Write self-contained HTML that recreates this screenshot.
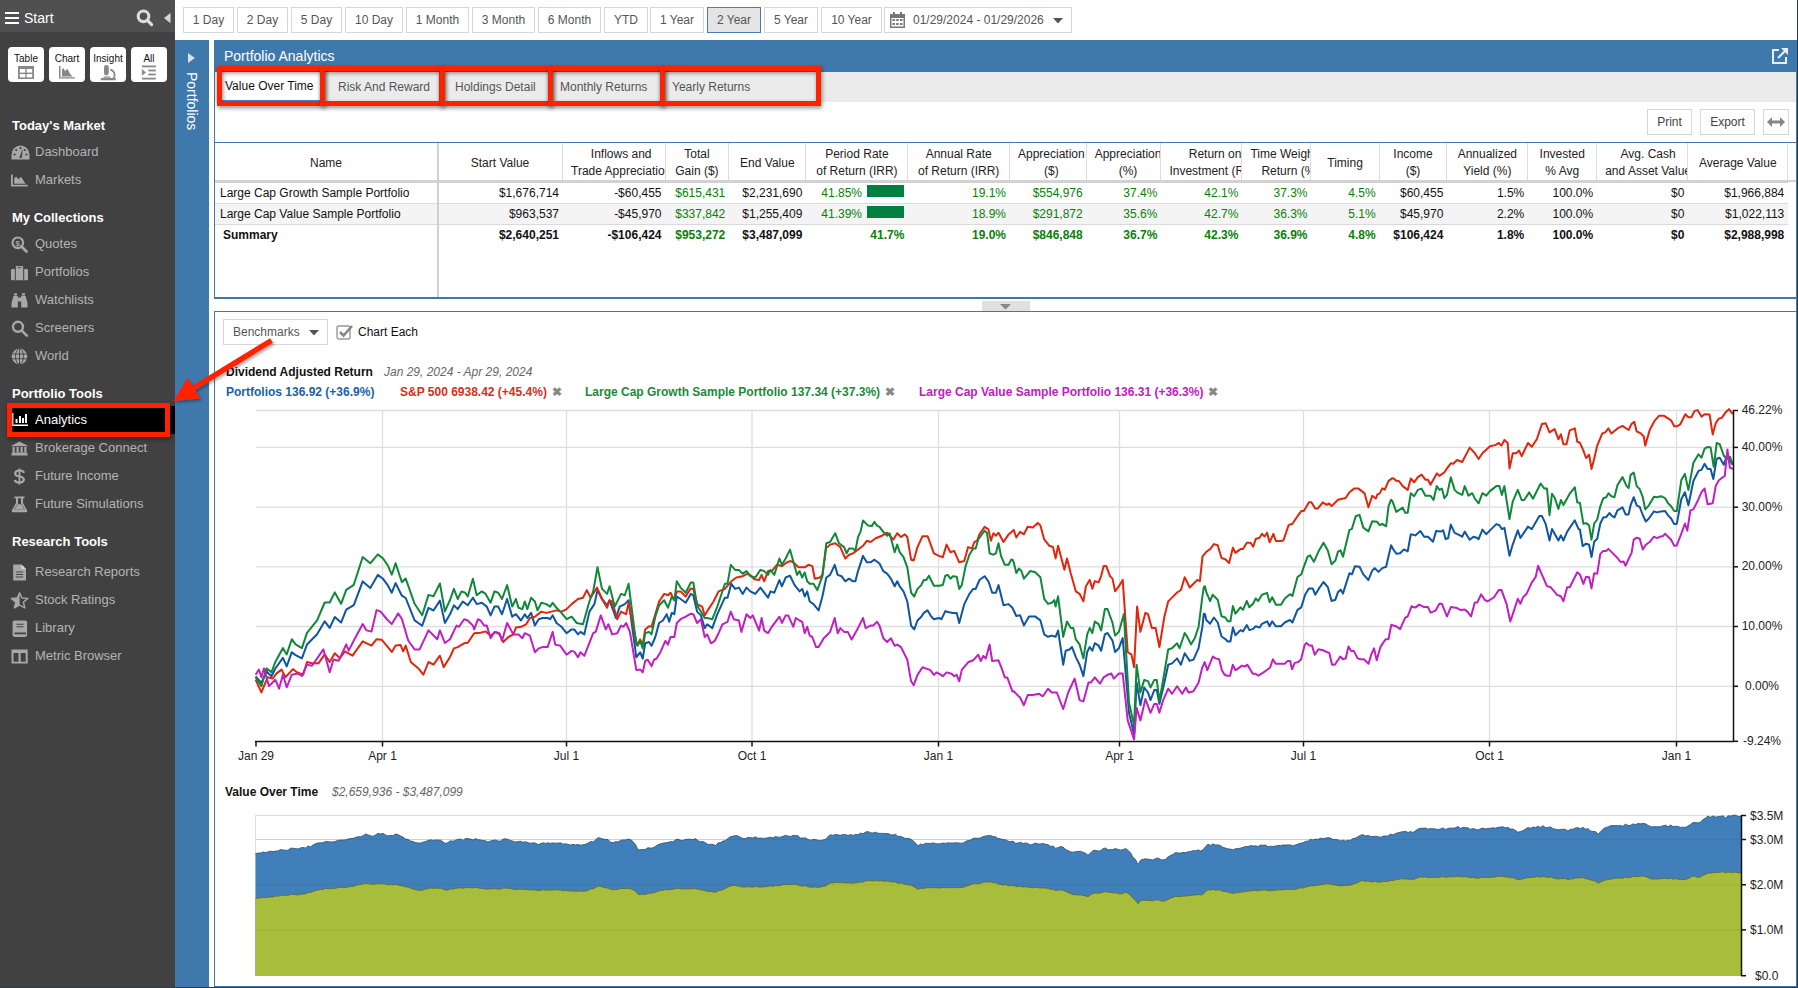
<!DOCTYPE html><html><head><meta charset="utf-8"><style>
*{box-sizing:border-box}
body{margin:0;width:1798px;height:988px;overflow:hidden;background:#fff;font-family:"Liberation Sans", sans-serif;position:relative}
.abs{position:absolute}
.sb{left:0;top:0;width:175px;height:988px;background:#414141}
.sbh{left:0;top:0;width:175px;height:32px;background:#505050}
.qb{position:absolute;top:47px;width:36px;height:35px;background:#fff;border-radius:4px;font-size:10px;color:#111;text-align:center;line-height:12px;padding-top:6px}
.sec{position:absolute;left:12px;color:#fff;font-weight:bold;font-size:13px;white-space:nowrap}
.it{position:absolute;left:35px;color:#b4b4b4;font-size:13px;white-space:nowrap}
.ic{position:absolute;left:10.5px;width:17px;height:17px}
.tb{position:absolute;top:7px;height:26px;border:1px solid #d6d6d6;background:#fff;color:#555;font-size:12px;text-align:center;line-height:24px}
.hd{position:absolute;top:143px;height:37px;overflow:hidden;font-size:12px;color:#222;text-align:center;border-right:1px solid #dcdcdc}
.hd span{display:inline-block;line-height:17px;white-space:nowrap;text-align:center}
.cell{position:absolute;height:21px;font-size:12px;line-height:21px;text-align:right;padding-right:4px;white-space:nowrap;overflow:hidden}
</style></head><body>

<div class="abs sb"></div><div class="abs sbh"></div>
<div class="abs" style="left:5px;top:12px;width:14px;height:2px;background:#fff"></div>
<div class="abs" style="left:5px;top:17px;width:14px;height:2px;background:#fff"></div>
<div class="abs" style="left:5px;top:22px;width:14px;height:2px;background:#fff"></div>
<div class="abs" style="left:24px;top:10px;color:#fff;font-size:14px;line-height:16px">Start</div>
<svg class="abs" style="left:136px;top:9px" width="18" height="18" viewBox="0 0 18 18"><circle cx="7.5" cy="7.3" r="5.3" fill="none" stroke="#dcdcdc" stroke-width="3.1"/><line x1="11.3" y1="11.2" x2="15.6" y2="15.6" stroke="#dcdcdc" stroke-width="3.3" stroke-linecap="round"/></svg>
<svg class="abs" style="left:164px;top:12.8px" width="7" height="11" viewBox="0 0 7 11"><path d="M6.5,0 L0,5.1 L6.5,10.2 Z" fill="#d8d8d8"/></svg>
<div class="qb" style="left:8px">Table<svg style="position:absolute;left:10px;top:18.5px;overflow:visible" width="16" height="14" viewBox="0 0 16 14"><rect x="0" y="0" width="16" height="13" fill="#888"/><rect x="1.8" y="3" width="5.5" height="3.6" fill="#fff"/><rect x="8.7" y="3" width="5.5" height="3.6" fill="#fff"/><rect x="1.8" y="8" width="5.5" height="3.4" fill="#fff"/><rect x="8.7" y="8" width="5.5" height="3.4" fill="#fff"/></svg></div>
<div class="qb" style="left:49px">Chart<svg style="position:absolute;left:10px;top:18.5px;overflow:visible" width="16" height="14" viewBox="0 0 16 14"><path d="M0,0 L1.5,0 L1.5,11.2 L16,11.2 L16,12.6 L0,12.6 Z" fill="#888"/><path d="M3,10.5 L3,3.5 L4.3,2 L6,5 L8.3,2.8 L11.2,8 L13.5,10.5 Z" fill="#888"/></svg></div>
<div class="qb" style="left:90px">Insight<svg style="position:absolute;left:10px;top:18.5px;overflow:visible" width="16" height="14" viewBox="0 0 16 14"><rect x="4" y="-1" width="4.8" height="10.4" rx="2.4" fill="#888"/><path d="M10.3,3.5 A5.5,5.5 0 0 1 13.5,12.2" fill="none" stroke="#888" stroke-width="1.8"/><rect x="3.5" y="10.5" width="6.8" height="1.2" fill="#888"/><path d="M1.5,12 L15.5,12 L15.9,14.2 L0.2,14.2 Z" fill="#888"/></svg></div>
<div class="qb" style="left:131px">All<svg style="position:absolute;left:10px;top:18.5px;overflow:visible" width="16" height="14" viewBox="0 0 16 14"><rect x="0.9" y="-0.5" width="13.9" height="1.8" fill="#888"/><rect x="7.3" y="3.6" width="7.5" height="1.8" fill="#888"/><rect x="7.3" y="7.6" width="7.5" height="1.8" fill="#888"/><rect x="0.9" y="11.7" width="13.9" height="1.8" fill="#888"/><path d="M0.9,3.1 L5,6.4 L0.9,9.7 Z" fill="#888"/></svg></div>
<div class="sec" style="top:118px">Today's Market</div>
<div class="sec" style="top:210px">My Collections</div>
<div class="sec" style="top:386px">Portfolio Tools</div>
<div class="sec" style="top:534px">Research Tools</div>
<div class="it" style="top:143.5px">Dashboard</div>
<svg class="ic" style="top:143.5px;overflow:visible" width="17" height="17" viewBox="0 0 17 17"><path d="M0.5,15.5 L0.5,10.8 A9,9.3 0 0 1 18.5,10.8 L18.5,15.5 Z" fill="#a8a8a8"/><circle cx="3.6" cy="10.5" r="1.1" fill="#414141"/><circle cx="5.2" cy="6" r="1.1" fill="#414141"/><circle cx="13.8" cy="6" r="1.1" fill="#414141"/><circle cx="15.4" cy="10.5" r="1.1" fill="#414141"/><circle cx="9.5" cy="4.2" r="1.1" fill="#414141"/><path d="M8.3,14 L11.8,4.5 L10.8,14 Z" fill="#414141"/></svg>
<div class="it" style="top:171.5px">Markets</div>
<svg class="ic" style="top:171.5px;overflow:visible" width="17" height="17" viewBox="0 0 17 17"><path d="M0,2.5 L1.8,2.5 L1.8,12.8 L16.7,12.8 L16.7,14.5 L0,14.5 Z" fill="#a8a8a8"/><path d="M3.2,11.8 L3.2,6.5 L5,4.5 L7.5,7.2 L10,4.8 L14.5,11.8 Z" fill="#a8a8a8"/></svg>
<div class="it" style="top:235.5px">Quotes</div>
<svg class="ic" style="top:235.5px;overflow:visible" width="17" height="17" viewBox="0 0 17 17"><circle cx="6.8" cy="6.8" r="5.3" fill="none" stroke="#a8a8a8" stroke-width="2.2"/><line x1="10.5" y1="10.5" x2="15.5" y2="15.5" stroke="#a8a8a8" stroke-width="2.8" stroke-linecap="round"/><text x="6.8" y="9.6" font-size="8" font-weight="bold" text-anchor="middle" fill="#a8a8a8" font-family="Liberation Sans">$</text></svg>
<div class="it" style="top:263.5px">Portfolios</div>
<svg class="ic" style="top:263.5px;overflow:visible" width="17" height="17" viewBox="0 0 17 17"><rect x="4.8" y="2" width="7.4" height="3" rx="0.8" fill="#a8a8a8"/><rect x="6.5" y="3.3" width="4" height="0.9" fill="#414141"/><rect x="0" y="5" width="17" height="11.2" rx="1.2" fill="#a8a8a8"/><rect x="3.8" y="5" width="1" height="11.2" fill="#414141"/><rect x="12.2" y="5" width="1" height="11.2" fill="#414141"/></svg>
<div class="it" style="top:291.5px">Watchlists</div>
<svg class="ic" style="top:291.5px;overflow:visible" width="17" height="17" viewBox="0 0 17 17"><rect x="3" y="1.3" width="3" height="2" fill="#a8a8a8"/><rect x="11" y="1.3" width="3" height="2" fill="#a8a8a8"/><path d="M2.5,3.8 L6.8,3.8 L6.8,15.5 L0.5,15.5 L0.5,11 Z M10.2,3.8 L14.5,3.8 L16.5,11 L16.5,15.5 L10.2,15.5 Z M6.8,5.5 L10.2,5.5 L10.2,9.5 L6.8,9.5 Z" fill="#a8a8a8"/></svg>
<div class="it" style="top:319.5px">Screeners</div>
<svg class="ic" style="top:319.5px;overflow:visible" width="17" height="17" viewBox="0 0 17 17"><circle cx="7" cy="6.8" r="5" fill="none" stroke="#a8a8a8" stroke-width="2.4"/><line x1="10.8" y1="10.6" x2="15.8" y2="15.6" stroke="#a8a8a8" stroke-width="2.6" stroke-linecap="round"/></svg>
<div class="it" style="top:347.5px">World</div>
<svg class="ic" style="top:347.5px;overflow:visible" width="17" height="17" viewBox="0 0 17 17"><circle cx="8.5" cy="8.4" r="7.8" fill="#a8a8a8"/><path d="M0.5,6 L16.5,6 M0.5,10.8 L16.5,10.8 M8.5,0.5 L8.5,16.3" stroke="#414141" stroke-width="0.9"/><ellipse cx="8.5" cy="8.4" rx="4" ry="7.8" fill="none" stroke="#414141" stroke-width="0.9"/></svg>
<div class="it" style="top:439.5px">Brokerage Connect</div>
<svg class="ic" style="top:439.5px;overflow:visible" width="17" height="17" viewBox="0 0 17 17"><path d="M0.3,5.8 L8.5,1.5 L16.7,5.8 L16.7,6.3 L0.3,6.3 Z" fill="#a8a8a8"/><rect x="1.5" y="7" width="2.2" height="5.5" fill="#a8a8a8"/><rect x="5.5" y="7" width="2.2" height="5.5" fill="#a8a8a8"/><rect x="9.5" y="7" width="2.2" height="5.5" fill="#a8a8a8"/><rect x="13.3" y="7" width="2.2" height="5.5" fill="#a8a8a8"/><path d="M1,12.5 L16,12.5 L16.7,15.5 L0.3,15.5 Z" fill="#a8a8a8"/></svg>
<div class="it" style="top:467.5px">Future Income</div>
<svg class="ic" style="top:467.5px;overflow:visible" width="17" height="17" viewBox="0 0 17 17"><rect x="7.6" y="0.5" width="1.8" height="16" fill="#a8a8a8"/><path d="M12.8,4.8 Q12.5,2.5 8.5,2.5 Q4.2,2.5 4.2,5.5 Q4.2,7.8 8.5,8.5 Q12.8,9.2 12.8,11.5 Q12.8,14.5 8.5,14.5 Q4.2,14.5 3.8,12" fill="none" stroke="#a8a8a8" stroke-width="2.2"/></svg>
<div class="it" style="top:495.5px">Future Simulations</div>
<svg class="ic" style="top:495.5px;overflow:visible" width="17" height="17" viewBox="0 0 17 17"><rect x="3.5" y="0.5" width="10" height="1.8" fill="#a8a8a8"/><path d="M5,2 L7,2 L7,7.5 L3,13.5 L14,13.5 L10,7.5 L10,2 L12,2 L12,7 L16.2,14.5 Q16.5,16.2 14.8,16.2 L2.2,16.2 Q0.5,16.2 0.8,14.5 L5,7 Z" fill="#a8a8a8"/><path d="M3.5,13.5 L6.8,8.3 L10.2,8.3 L13.5,13.5 Z" fill="#a8a8a8"/></svg>
<div class="it" style="top:563.5px">Research Reports</div>
<svg class="ic" style="top:563.5px;overflow:visible" width="17" height="17" viewBox="0 0 17 17"><path d="M2.2,0.5 L10.5,0.5 L15,5 L15,16.5 L2.2,16.5 Z" fill="#a8a8a8"/><path d="M10.5,0.5 L10.5,5 L15,5" fill="#d8d8d8"/><path d="M4.8,8 L12.2,8 M4.8,10.5 L12.2,10.5 M4.8,13 L12.2,13" stroke="#414141" stroke-width="1.1"/></svg>
<div class="it" style="top:591.5px">Stock Ratings</div>
<svg class="ic" style="top:591.5px;overflow:visible" width="17" height="17" viewBox="0 0 17 17"><path d="M8.6,0.8 L11,6 L16.8,6.4 L12.4,10.2 L13.8,16 L8.6,13 L3.4,16 L4.8,10.2 L0.4,6.4 L6.2,6 Z" fill="none" stroke="#a8a8a8" stroke-width="1.4" stroke-linejoin="round"/><path d="M8.6,0.8 L6.2,6 L0.4,6.4 L4.8,10.2 L3.4,16 L8.6,13 Z" fill="#a8a8a8"/><path d="M8.6,3 L10.2,6.8 L14.5,7.2 L11.3,9.9 L12.3,14.2 L8.6,12" fill="#a8a8a8" opacity="0.0"/></svg>
<div class="it" style="top:619.5px">Library</div>
<svg class="ic" style="top:619.5px;overflow:visible" width="17" height="17" viewBox="0 0 17 17"><rect x="1.6" y="0.5" width="14.5" height="16.4" rx="1.8" fill="#a8a8a8"/><path d="M5.5,4.3 L12.5,4.3 M5.5,6.8 L12.5,6.8" stroke="#414141" stroke-width="1.1"/><rect x="3.5" y="12.5" width="11.5" height="1.8" fill="#414141"/></svg>
<div class="it" style="top:647.5px">Metric Browser</div>
<svg class="ic" style="top:647.5px;overflow:visible" width="17" height="17" viewBox="0 0 17 17"><rect x="0.5" y="1.5" width="16.2" height="14" fill="#a8a8a8"/><rect x="2.5" y="5" width="5" height="8.7" fill="#414141"/><rect x="9.7" y="5" width="5" height="8.7" fill="#414141"/></svg>
<div class="abs" style="left:10px;top:406px;width:165px;height:28px;background:#000"></div>
<div class="abs" style="left:35px;top:412px;color:#fff;font-size:13px;white-space:nowrap">Analytics</div>
<svg class="abs" style="left:12px;top:413px" width="16" height="13" viewBox="0 0 16 13"><rect x="0" y="0" width="1.5" height="13" fill="#fff"/><rect x="0" y="11.5" width="16" height="1.5" fill="#fff"/><rect x="3.5" y="6" width="2" height="4" fill="#fff"/><rect x="7" y="3" width="2" height="7" fill="#fff"/><rect x="10" y="5" width="2" height="5" fill="#fff"/><rect x="13" y="1" width="2" height="9" fill="#fff"/></svg>
<div class="abs" style="left:7px;top:403px;width:163px;height:34px;border:5px solid #ff2200;filter:drop-shadow(1px 2px 2px rgba(0,0,0,.45))"></div>
<div class="tb" style="left:183px;width:51px">1 Day</div>
<div class="tb" style="left:237px;width:51px">2 Day</div>
<div class="tb" style="left:291px;width:51px">5 Day</div>
<div class="tb" style="left:345px;width:58px">10 Day</div>
<div class="tb" style="left:406px;width:63px">1 Month</div>
<div class="tb" style="left:472px;width:63px">3 Month</div>
<div class="tb" style="left:538px;width:63px">6 Month</div>
<div class="tb" style="left:604px;width:44px">YTD</div>
<div class="tb" style="left:650px;width:54px">1 Year</div>
<div class="tb" style="left:707px;width:54px;background:#e4e4e4;border-color:#4a7db5">2 Year</div>
<div class="tb" style="left:764px;width:54px">5 Year</div>
<div class="tb" style="left:821px;width:61px">10 Year</div>
<div class="tb" style="left:884px;width:188px;text-align:left;padding-left:28px">01/29/2024 - 01/29/2026</div>
<svg class="abs" style="left:890px;top:12px" width="15" height="16" viewBox="0 0 15 16"><rect x="0" y="2" width="15" height="14" fill="#777"/><rect x="3" y="0" width="2" height="4" fill="#777"/><rect x="10" y="0" width="2" height="4" fill="#777"/><rect x="1.5" y="6" width="12" height="8.5" fill="#fff"/><g fill="#777"><rect x="2.5" y="7" width="2.5" height="2"/><rect x="6.2" y="7" width="2.5" height="2"/><rect x="10" y="7" width="2.5" height="2"/><rect x="2.5" y="11" width="2.5" height="2"/><rect x="6.2" y="11" width="2.5" height="2"/><rect x="10" y="11" width="2.5" height="2"/></g></svg>
<svg class="abs" style="left:1053px;top:18px" width="10" height="6" viewBox="0 0 10 6"><path d="M0,0 L10,0 L5,5.5 Z" fill="#555"/></svg>
<div class="abs" style="left:175px;top:40px;width:34px;height:948px;background:#3f78ab"></div>
<svg class="abs" style="left:188px;top:53px" width="7" height="10" viewBox="0 0 7 10"><path d="M0,0 L6.8,5 L0,10 Z" fill="#d8e2ec"/></svg>
<div class="abs" style="left:183px;top:72px;width:20px;height:60px;"><div style="position:absolute;left:0;top:0;transform-origin:0 0;transform:translate(18px,0) rotate(90deg);color:#fff;font-size:14px;white-space:nowrap;line-height:18px">Portfolios</div></div>
<div class="abs" style="left:214px;top:40px;width:1px;height:259px;background:#3f78ab"></div>
<div class="abs" style="left:1796px;top:40px;width:1px;height:948px;background:#3f78ab"></div>
<div class="abs" style="left:1797px;top:0px;width:1px;height:988px;background:#263f4a"></div>
<div class="abs" style="left:214px;top:40px;width:1582px;height:32px;background:#3f78ab"></div>
<div class="abs" style="left:224px;top:47px;color:#fff;font-size:14px;line-height:18px;white-space:nowrap">Portfolio Analytics</div>
<svg class="abs" style="left:1771px;top:47px" width="18" height="18" viewBox="0 0 18 18"><path d="M8,3 L2,3 L2,16 L15,16 L15,10" fill="none" stroke="#e8eef5" stroke-width="2"/><path d="M10,1 L17,1 L17,8 Z" fill="#e8eef5"/><line x1="7" y1="11" x2="14" y2="4" stroke="#e8eef5" stroke-width="2.2"/></svg>
<div class="abs" style="left:215px;top:72px;width:1581px;height:30px;background:#ebebeb"></div>
<div class="abs" style="left:218px;top:72px;width:104px;height:30px;background:#fff;border-bottom:2px solid #3d8fe0"></div>
<div class="abs" style="left:225px;top:79px;color:#111;font-size:12px;line-height:14px;white-space:nowrap">Value Over Time</div>
<div class="abs" style="left:338px;top:80px;color:#555;font-size:12px;line-height:14px;white-space:nowrap">Risk And Reward</div>
<div class="abs" style="left:455px;top:80px;color:#555;font-size:12px;line-height:14px;white-space:nowrap">Holdings Detail</div>
<div class="abs" style="left:560px;top:80px;color:#555;font-size:12px;line-height:14px;white-space:nowrap">Monthly Returns</div>
<div class="abs" style="left:672px;top:80px;color:#555;font-size:12px;line-height:14px;white-space:nowrap">Yearly Returns</div>
<div class="abs" style="left:217px;top:66px;width:108px;height:40px;border:5px solid #ff2200;filter:drop-shadow(1px 2px 2px rgba(0,0,0,.45))"></div>
<div class="abs" style="left:320px;top:66px;width:124px;height:40px;border:5px solid #ff2200;filter:drop-shadow(1px 2px 2px rgba(0,0,0,.45))"></div>
<div class="abs" style="left:440px;top:66px;width:113px;height:40px;border:5px solid #ff2200;filter:drop-shadow(1px 2px 2px rgba(0,0,0,.45))"></div>
<div class="abs" style="left:548px;top:66px;width:117px;height:40px;border:5px solid #ff2200;filter:drop-shadow(1px 2px 2px rgba(0,0,0,.45))"></div>
<div class="abs" style="left:660px;top:66px;width:161px;height:40px;border:5px solid #ff2200;filter:drop-shadow(1px 2px 2px rgba(0,0,0,.45))"></div>
<div class="tb" style="left:1647px;top:109px;width:45px;height:26px;color:#444">Print</div>
<div class="tb" style="left:1700px;top:109px;width:55px;height:26px;color:#444">Export</div>
<div class="tb" style="left:1763px;top:109px;width:26px;height:26px"></div>
<svg class="abs" style="left:1767px;top:117px" width="18" height="10" viewBox="0 0 18 10"><path d="M0,5 L5,0 L5,3.5 L13,3.5 L13,0 L18,5 L13,10 L13,6.5 L5,6.5 L5,10 Z" fill="#888"/></svg>
<div class="abs" style="left:214px;top:142px;width:1582px;height:157px;border-top:1px solid #3f78ab;border-left:1px solid #3f78ab;border-bottom:2px solid #3f78ab"></div>
<div class="hd" style="left:215.0px;width:223.0px;padding:12px 0 0 8px;padding-right:8px"><span>Name</span></div>
<div class="hd" style="left:438.0px;width:125.0px;padding:12px 0 0 8px;padding-right:8px"><span>Start Value</span></div>
<div class="hd" style="left:563.0px;width:102.5px;padding:3px 0 0 8px;padding-right:8px"><span>Inflows and<br>Trade Appreciation</span></div>
<div class="hd" style="left:665.5px;width:63.8px;padding:3px 0 0 8px;padding-right:8px"><span>Total<br>Gain ($)</span></div>
<div class="hd" style="left:729.3px;width:77.1px;padding:12px 0 0 8px;padding-right:8px"><span>End Value</span></div>
<div class="hd" style="left:806.4px;width:102.0px;padding:3px 0 0 8px;padding-right:8px"><span>Period Rate<br>of Return (IRR)</span></div>
<div class="hd" style="left:908.4px;width:101.6px;padding:3px 0 0 8px;padding-right:8px"><span>Annual Rate<br>of Return (IRR)</span></div>
<div class="hd" style="left:1010.0px;width:76.7px;padding:3px 0 0 8px;padding-right:8px"><span>Appreciation<br>($)</span></div>
<div class="hd" style="left:1086.7px;width:74.7px;padding:3px 0 0 8px;padding-right:8px"><span>Appreciation<br>(%)</span></div>
<div class="hd" style="left:1161.4px;width:81.0px;padding:3px 0 0 8px;padding-right:8px"><span>Return on<br>Investment (ROI)</span></div>
<div class="hd" style="left:1242.4px;width:69.1px;padding:3px 0 0 8px;padding-right:8px"><span>Time Weighted<br>Return (%)</span></div>
<div class="hd" style="left:1311.5px;width:68.1px;padding:12px 0 0 8px;padding-right:8px"><span>Timing</span></div>
<div class="hd" style="left:1379.6px;width:67.8px;padding:3px 0 0 8px;padding-right:8px"><span>Income<br>($)</span></div>
<div class="hd" style="left:1447.4px;width:80.9px;padding:3px 0 0 8px;padding-right:8px"><span>Annualized<br>Yield (%)</span></div>
<div class="hd" style="left:1528.3px;width:68.9px;padding:3px 0 0 8px;padding-right:8px"><span>Invested<br>% Avg</span></div>
<div class="hd" style="left:1597.2px;width:91.2px;padding:3px 0 0 8px;padding-right:8px"><span>Avg. Cash<br>and Asset Value</span></div>
<div class="hd" style="left:1688.4px;width:99.9px;padding:12px 0 0 8px;padding-right:8px"><span>Average Value</span></div>
<div class="abs" style="left:215px;top:180px;width:1573px;height:3px;background:#d2d2d2"></div>
<div class="abs" style="left:1788px;top:180px;width:8px;height:2px;background:#d2d2d2"></div>
<div class="abs" style="left:215px;top:203px;width:1573px;height:1px;background:#dadada"></div>
<div class="abs" style="left:215px;top:204px;width:1573px;height:20px;background:#f4f4f4"></div>
<div class="abs" style="left:215px;top:224px;width:1573px;height:1px;background:#dadada"></div>
<div class="cell" style="left:220.0px;top:183px;width:218.0px;text-align:left;color:#111;">Large Cap Growth Sample Portfolio</div>
<div class="cell" style="left:438.0px;top:183px;width:125.0px;color:#111;">$1,676,714</div>
<div class="cell" style="left:563.0px;top:183px;width:102.5px;color:#111;">-$60,455</div>
<div class="cell" style="left:665.5px;top:183px;width:63.8px;color:#0a800a;">$615,431</div>
<div class="cell" style="left:729.3px;top:183px;width:77.1px;color:#111;">$2,231,690</div>
<div class="cell" style="left:806.4px;top:183px;width:59.6px;color:#0a800a;">41.85%</div>
<div class="abs" style="left:867px;top:185px;width:37px;height:12px;background:#008040"></div>
<div class="cell" style="left:908.4px;top:183px;width:101.6px;color:#0a800a;">19.1%</div>
<div class="cell" style="left:1010.0px;top:183px;width:76.7px;color:#0a800a;">$554,976</div>
<div class="cell" style="left:1086.7px;top:183px;width:74.7px;color:#0a800a;">37.4%</div>
<div class="cell" style="left:1161.4px;top:183px;width:81.0px;color:#0a800a;">42.1%</div>
<div class="cell" style="left:1242.4px;top:183px;width:69.1px;color:#0a800a;">37.3%</div>
<div class="cell" style="left:1311.5px;top:183px;width:68.1px;color:#0a800a;">4.5%</div>
<div class="cell" style="left:1379.6px;top:183px;width:67.8px;color:#111;">$60,455</div>
<div class="cell" style="left:1447.4px;top:183px;width:80.9px;color:#111;">1.5%</div>
<div class="cell" style="left:1528.3px;top:183px;width:68.9px;color:#111;">100.0%</div>
<div class="cell" style="left:1597.2px;top:183px;width:91.2px;color:#111;">$0</div>
<div class="cell" style="left:1688.4px;top:183px;width:99.9px;color:#111;">$1,966,884</div>
<div class="cell" style="left:220.0px;top:204px;width:218.0px;text-align:left;color:#111;">Large Cap Value Sample Portfolio</div>
<div class="cell" style="left:438.0px;top:204px;width:125.0px;color:#111;">$963,537</div>
<div class="cell" style="left:563.0px;top:204px;width:102.5px;color:#111;">-$45,970</div>
<div class="cell" style="left:665.5px;top:204px;width:63.8px;color:#0a800a;">$337,842</div>
<div class="cell" style="left:729.3px;top:204px;width:77.1px;color:#111;">$1,255,409</div>
<div class="cell" style="left:806.4px;top:204px;width:59.6px;color:#0a800a;">41.39%</div>
<div class="abs" style="left:867px;top:206px;width:37px;height:12px;background:#008040"></div>
<div class="cell" style="left:908.4px;top:204px;width:101.6px;color:#0a800a;">18.9%</div>
<div class="cell" style="left:1010.0px;top:204px;width:76.7px;color:#0a800a;">$291,872</div>
<div class="cell" style="left:1086.7px;top:204px;width:74.7px;color:#0a800a;">35.6%</div>
<div class="cell" style="left:1161.4px;top:204px;width:81.0px;color:#0a800a;">42.7%</div>
<div class="cell" style="left:1242.4px;top:204px;width:69.1px;color:#0a800a;">36.3%</div>
<div class="cell" style="left:1311.5px;top:204px;width:68.1px;color:#0a800a;">5.1%</div>
<div class="cell" style="left:1379.6px;top:204px;width:67.8px;color:#111;">$45,970</div>
<div class="cell" style="left:1447.4px;top:204px;width:80.9px;color:#111;">2.2%</div>
<div class="cell" style="left:1528.3px;top:204px;width:68.9px;color:#111;">100.0%</div>
<div class="cell" style="left:1597.2px;top:204px;width:91.2px;color:#111;">$0</div>
<div class="cell" style="left:1688.4px;top:204px;width:99.9px;color:#111;">$1,022,113</div>
<div class="cell" style="left:223.0px;top:225px;width:215.0px;text-align:left;color:#111;font-weight:bold;">Summary</div>
<div class="cell" style="left:438.0px;top:225px;width:125.0px;color:#111;font-weight:bold;">$2,640,251</div>
<div class="cell" style="left:563.0px;top:225px;width:102.5px;color:#111;font-weight:bold;">-$106,424</div>
<div class="cell" style="left:665.5px;top:225px;width:63.8px;color:#0a800a;font-weight:bold;">$953,272</div>
<div class="cell" style="left:729.3px;top:225px;width:77.1px;color:#111;font-weight:bold;">$3,487,099</div>
<div class="cell" style="left:806.4px;top:225px;width:102.0px;color:#0a800a;font-weight:bold;">41.7%</div>
<div class="cell" style="left:908.4px;top:225px;width:101.6px;color:#0a800a;font-weight:bold;">19.0%</div>
<div class="cell" style="left:1010.0px;top:225px;width:76.7px;color:#0a800a;font-weight:bold;">$846,848</div>
<div class="cell" style="left:1086.7px;top:225px;width:74.7px;color:#0a800a;font-weight:bold;">36.7%</div>
<div class="cell" style="left:1161.4px;top:225px;width:81.0px;color:#0a800a;font-weight:bold;">42.3%</div>
<div class="cell" style="left:1242.4px;top:225px;width:69.1px;color:#0a800a;font-weight:bold;">36.9%</div>
<div class="cell" style="left:1311.5px;top:225px;width:68.1px;color:#0a800a;font-weight:bold;">4.8%</div>
<div class="cell" style="left:1379.6px;top:225px;width:67.8px;color:#111;font-weight:bold;">$106,424</div>
<div class="cell" style="left:1447.4px;top:225px;width:80.9px;color:#111;font-weight:bold;">1.8%</div>
<div class="cell" style="left:1528.3px;top:225px;width:68.9px;color:#111;font-weight:bold;">100.0%</div>
<div class="cell" style="left:1597.2px;top:225px;width:91.2px;color:#111;font-weight:bold;">$0</div>
<div class="cell" style="left:1688.4px;top:225px;width:99.9px;color:#111;font-weight:bold;">$2,988,998</div>
<div class="abs" style="left:437px;top:143px;width:2px;height:154px;background:#d0d0d0;z-index:1"></div>
<div class="abs" style="left:982px;top:301px;width:48px;height:10px;background:#e0e0e0"></div>
<svg class="abs" style="left:1000px;top:304px" width="11" height="6" viewBox="0 0 11 6"><path d="M0,0 L11,0 L5.5,5.5 Z" fill="#888"/></svg>
<div class="abs" style="left:214px;top:311px;width:1583px;height:676px;border-top:1px solid #3f78ab;border-left:1px solid #3f78ab;border-bottom:1px solid #3f78ab"></div>
<div class="abs" style="left:223px;top:319px;width:105px;height:26px;border:1px solid #d6d6d6;color:#555;font-size:12px;line-height:24px;padding-left:9px">Benchmarks</div>
<svg class="abs" style="left:309px;top:330px" width="10" height="6" viewBox="0 0 10 6"><path d="M0,0 L10,0 L5,5.5 Z" fill="#555"/></svg>
<svg class="abs" style="left:336px;top:323px" width="18" height="17" viewBox="0 0 18 17"><rect x="1" y="3" width="13" height="13" rx="2" fill="none" stroke="#999" stroke-width="1.4"/><path d="M4,9 L7.5,12.5 L16,3" fill="none" stroke="#888" stroke-width="2.6"/></svg>
<div class="abs" style="left:358px;top:325px;color:#111;font-size:12px;line-height:14px">Chart Each</div>
<div class="abs" style="left:226px;top:365px;color:#111;font-size:12px;font-weight:bold;line-height:14px;white-space:nowrap">Dividend Adjusted Return</div>
<div class="abs" style="left:384px;top:365px;color:#666;font-size:12px;font-style:italic;line-height:14px;white-space:nowrap">Jan 29, 2024 - Apr 29, 2024</div>
<div class="abs" style="left:226px;top:385px;color:#1a5fa8;font-size:12px;font-weight:bold;line-height:14px;white-space:nowrap">Portfolios 136.92 (+36.9%)</div>
<div class="abs" style="left:400px;top:385px;color:#d4301a;font-size:12px;font-weight:bold;line-height:14px;white-space:nowrap">S&amp;P 500 6938.42 (+45.4%)<span style="color:#888;margin-left:5px">&#x2716;</span></div>
<div class="abs" style="left:585px;top:385px;color:#1a8a3a;font-size:12px;font-weight:bold;line-height:14px;white-space:nowrap">Large Cap Growth Sample Portfolio 137.34 (+37.3%)<span style="color:#888;margin-left:5px">&#x2716;</span></div>
<div class="abs" style="left:919px;top:385px;color:#c020c0;font-size:12px;font-weight:bold;line-height:14px;white-space:nowrap">Large Cap Value Sample Portfolio 136.31 (+36.3%)<span style="color:#888;margin-left:5px">&#x2716;</span></div>
<svg class="abs" style="left:0;top:0" width="1798" height="988" viewBox="0 0 1798 988">
<line x1="256" y1="410.5" x2="1733" y2="410.5" stroke="#dedede" stroke-width="1.3"/>
<line x1="256" y1="447.4" x2="1733" y2="447.4" stroke="#dedede" stroke-width="1.3"/>
<line x1="256" y1="507.2" x2="1733" y2="507.2" stroke="#dedede" stroke-width="1.3"/>
<line x1="256" y1="566.8" x2="1733" y2="566.8" stroke="#dedede" stroke-width="1.3"/>
<line x1="256" y1="626.5" x2="1733" y2="626.5" stroke="#dedede" stroke-width="1.3"/>
<line x1="256" y1="686.3" x2="1733" y2="686.3" stroke="#dedede" stroke-width="1.3"/>
<line x1="382.5" y1="410" x2="382.5" y2="741" stroke="#dedede" stroke-width="1.3"/>
<line x1="566.5" y1="410" x2="566.5" y2="741" stroke="#dedede" stroke-width="1.3"/>
<line x1="752" y1="410" x2="752" y2="741" stroke="#dedede" stroke-width="1.3"/>
<line x1="938.5" y1="410" x2="938.5" y2="741" stroke="#dedede" stroke-width="1.3"/>
<line x1="1119.5" y1="410" x2="1119.5" y2="741" stroke="#dedede" stroke-width="1.3"/>
<line x1="1303.5" y1="410" x2="1303.5" y2="741" stroke="#dedede" stroke-width="1.3"/>
<line x1="1489.5" y1="410" x2="1489.5" y2="741" stroke="#dedede" stroke-width="1.3"/>
<line x1="1676.5" y1="410" x2="1676.5" y2="741" stroke="#dedede" stroke-width="1.3"/>
<path d="M255.6,676.3 L261.4,682.8 L266.5,671.6 L271.5,676.3 L275.3,668.5 L282.9,657.8 L286.7,666.4 L291.8,652.2 L295.6,655.1 L301.9,658.3 L307.0,644.5 L317.1,634.2 L324.7,621.3 L329.7,627.9 L334.8,617.0 L341.1,622.6 L346.2,609.7 L353.8,605.1 L362.7,581.4 L370.3,588.1 L377.8,574.9 L382.9,578.7 L388.0,585.7 L391.8,592.7 L395.6,583.1 L401.9,595.7 L405.7,598.0 L414.6,620.4 L422.2,625.7 L428.5,607.9 L433.5,610.5 L439.9,600.6 L444.9,622.9 L450.0,614.3 L453.9,605.3 L457.7,609.1 L462.8,601.5 L467.8,605.3 L472.9,597.7 L476.7,604.1 L481.8,602.8 L486.8,606.6 L490.6,615.4 L494.4,606.6 L498.2,606.6 L502.0,614.2 L507.1,599.0 L512.2,616.7 L515.9,614.2 L521.0,620.5 L524.8,614.2 L527.3,618.0 L531.1,612.9 L534.9,625.6 L538.7,619.2 L542.5,618.0 L547.6,618.0 L550.1,619.2 L552.7,615.4 L556.5,623.0 L561.5,626.8 L566.6,633.2 L571.6,629.4 L574.2,629.4 L578.0,634.4 L580.5,631.9 L584.3,634.4 L589.4,611.6 L594.4,604.1 L597.5,590.1 L602.0,599.0 L607.1,605.3 L609.6,600.3 L615.9,618.0 L619.7,606.6 L624.8,604.1 L628.6,600.3 L636.3,657.2 L637.5,655.9 L640.1,652.2 L642.7,658.5 L645.2,643.3 L649.0,642.0 L651.5,645.8 L655.3,637.0 L659.1,623.0 L662.9,620.5 L666.7,614.2 L669.2,621.8 L671.8,612.9 L674.3,614.2 L676.8,596.5 L680.6,599.0 L685.7,602.8 L690.8,593.9 L693.3,595.2 L697.1,611.6 L700.9,615.4 L704.7,628.1 L707.2,624.3 L712.3,628.1 L717.3,614.2 L724.9,597.7 L727.5,597.7 L731.3,583.8 L735.1,588.9 L738.9,587.6 L742.7,593.9 L746.5,587.6 L750.3,591.4 L755.3,593.9 L760.4,587.6 L764.2,592.7 L768.0,597.7 L770.5,591.4 L774.3,592.7 L779.4,580.0 L781.9,586.3 L785.7,577.5 L790.0,575.7 L794.6,585.1 L799.6,591.4 L802.2,588.9 L804.7,596.5 L807.2,591.4 L809.7,601.5 L813.5,604.1 L818.6,610.4 L822.4,596.5 L826.3,577.5 L830.1,574.9 L834.7,564.8 L837.7,574.9 L841.5,576.2 L845.3,581.3 L849.1,578.7 L852.9,581.3 L855.4,581.3 L858.0,571.1 L863.0,555.9 L866.8,562.3 L870.6,562.3 L874.4,559.7 L879.5,563.5 L883.3,571.1 L887.1,573.7 L890.9,578.7 L894.7,586.3 L897.2,581.3 L899.7,586.3 L903.5,591.4 L907.3,601.5 L911.1,625.6 L914.2,629.4 L917.5,620.5 L921.3,616.7 L923.8,612.9 L927.6,610.4 L931.4,616.7 L933.9,619.2 L939.0,618.0 L941.5,619.2 L945.3,611.1 L949.1,612.2 L952.9,612.9 L956.7,612.9 L959.2,623.0 L964.3,604.1 L969.4,593.9 L973.2,588.9 L975.7,588.9 L979.5,580.0 L984.6,576.2 L988.4,581.3 L992.2,592.7 L995.9,592.7 L998.5,585.1 L1003.5,605.3 L1008.6,604.1 L1012.4,607.8 L1016.3,616.0 L1020.1,615.3 L1023.9,625.4 L1029.0,616.6 L1035.3,616.6 L1040.4,620.4 L1044.2,634.3 L1048.0,636.8 L1051.8,635.6 L1055.6,636.8 L1058.1,630.5 L1063.2,664.7 L1065.7,650.8 L1069.5,649.5 L1072.0,647.0 L1075.8,657.1 L1079.6,664.7 L1083.4,676.1 L1087.2,652.0 L1089.7,647.0 L1092.3,650.8 L1094.8,643.2 L1098.6,645.7 L1101.1,650.8 L1104.9,634.3 L1107.5,633.0 L1112.5,640.6 L1115.1,652.0 L1118.9,648.2 L1122.7,638.1 L1129.0,712.8 L1134.1,734.3 L1136.6,682.4 L1140.4,705.2 L1144.2,687.5 L1148.0,692.5 L1150.5,700.1 L1154.3,690.0 L1156.8,690.0 L1159.4,703.9 L1164.4,682.4 L1168.2,664.7 L1172.0,663.4 L1177.1,658.4 L1180.9,664.7 L1184.7,653.3 L1189.7,660.9 L1193.5,659.6 L1198.6,648.2 L1202.4,626.7 L1203.8,613.7 L1204.9,614.1 L1206.3,620.0 L1210.1,623.8 L1213.9,617.5 L1217.7,622.5 L1221.5,636.5 L1225.3,639.0 L1227.8,641.5 L1230.4,641.5 L1232.9,627.6 L1235.4,635.2 L1240.5,630.1 L1243.0,631.4 L1246.8,625.1 L1249.4,630.1 L1253.2,628.9 L1255.7,626.3 L1259.5,627.6 L1262.0,623.8 L1267.1,621.3 L1269.6,626.3 L1272.2,621.3 L1275.9,626.3 L1281.0,626.3 L1284.8,622.5 L1289.9,620.0 L1292.4,622.5 L1297.5,609.9 L1301.3,607.3 L1305.1,594.7 L1308.9,588.4 L1312.7,588.4 L1315.2,594.7 L1319.0,588.4 L1323.5,582.0 L1327.8,587.1 L1331.6,601.0 L1335.4,599.7 L1338.0,592.2 L1340.5,589.6 L1343.0,593.4 L1349.4,573.2 L1351.9,574.4 L1354.9,566.3 L1359.5,566.8 L1363.3,574.4 L1368.4,580.0 L1372.2,570.6 L1374.7,568.1 L1378.5,571.9 L1382.3,568.1 L1386.1,566.8 L1391.1,545.3 L1392.5,548.1 L1396.3,553.7 L1400.1,553.2 L1403.9,549.4 L1407.7,551.4 L1410.8,534.2 L1415.3,535.4 L1420.4,531.1 L1424.2,536.7 L1428.0,536.7 L1433.0,541.8 L1436.1,531.1 L1440.6,531.6 L1443.2,530.4 L1445.7,539.2 L1448.2,538.0 L1450.8,524.6 L1454.6,532.9 L1458.4,534.7 L1462.2,536.7 L1464.7,531.6 L1469.7,539.7 L1473.5,536.7 L1477.3,538.0 L1478.6,539.2 L1482.4,529.6 L1486.2,534.2 L1490.0,530.4 L1496.3,524.1 L1499.4,525.3 L1501.9,529.1 L1504.4,527.8 L1509.5,555.7 L1512.8,544.3 L1517.8,530.4 L1520.4,538.0 L1528.0,526.6 L1531.8,529.1 L1539.4,515.9 L1541.9,515.9 L1545.7,524.1 L1549.5,540.5 L1552.0,529.1 L1558.4,540.5 L1560.9,535.4 L1563.4,540.5 L1567.2,531.6 L1574.8,520.3 L1578.6,529.1 L1579.9,529.5 L1582.7,546.1 L1586.1,543.6 L1589.1,544.8 L1591.5,557.0 L1594.2,541.8 L1597.2,538.7 L1600.3,523.5 L1603.3,517.5 L1606.3,517.1 L1609.4,513.0 L1611.4,515.4 L1614.4,517.5 L1617.5,510.4 L1622.5,507.3 L1625.6,514.4 L1628.6,514.4 L1630.6,505.3 L1633.7,497.2 L1636.7,505.3 L1639.7,506.9 L1642.8,515.0 L1645.8,521.5 L1648.9,518.5 L1653.9,511.4 L1657.0,512.4 L1661.0,511.4 L1665.1,511.0 L1668.1,515.4 L1671.1,518.5 L1674.2,523.9 L1676.8,523.9 L1681.3,499.2 L1684.9,492.2 L1688.4,505.3 L1693.4,481.0 L1698.5,470.9 L1701.5,469.9 L1704.6,463.8 L1707.6,468.9 L1710.6,468.9 L1713.3,479.0 L1716.7,458.7 L1719.7,457.7 L1723.8,464.8 L1726.8,455.7 L1729.9,460.8 L1732.9,464.8" fill="none" stroke="#0f559f" stroke-width="2" stroke-linejoin="round"/>
<path d="M255.6,679.7 L261.4,692.4 L267.7,677.2 L272.8,678.5 L276.6,673.4 L281.6,669.6 L285.4,677.2 L293.0,669.1 L296.8,672.2 L303.2,674.7 L307.0,662.0 L312.0,663.3 L318.4,663.3 L324.7,654.4 L329.7,662.0 L334.8,653.2 L339.9,658.2 L344.9,651.4 L352.5,655.7 L362.7,641.3 L371.5,645.6 L376.6,639.2 L381.6,639.7 L386.7,645.6 L391.8,651.9 L395.6,645.6 L400.6,645.1 L403.2,651.4 L405.7,645.6 L410.8,662.0 L418.4,668.4 L423.4,674.7 L428.5,662.0 L433.5,664.6 L439.9,655.7 L443.7,667.1 L450.0,657.0 L453.9,648.4 L457.7,647.1 L464.1,643.3 L467.8,642.8 L474.2,633.2 L480.5,632.7 L485.6,631.4 L490.6,635.7 L495.7,631.9 L499.5,634.4 L503.3,642.0 L508.4,637.0 L513.4,634.4 L515.9,627.6 L521.0,626.8 L526.1,624.3 L529.9,618.0 L534.9,616.7 L541.3,611.6 L546.3,612.9 L551.4,611.6 L556.5,610.4 L561.5,611.6 L566.6,609.1 L571.6,604.1 L578.0,599.0 L583.0,597.7 L586.8,590.1 L590.6,597.7 L597.0,587.6 L602.0,599.0 L607.1,607.8 L609.6,600.3 L612.2,601.5 L617.2,619.2 L621.0,611.6 L626.1,614.2 L628.6,602.8 L636.3,642.0 L637.5,644.6 L640.1,639.5 L642.7,644.6 L645.2,629.4 L649.0,626.3 L651.5,626.8 L655.3,614.2 L659.1,601.5 L664.2,593.9 L668.0,595.2 L670.5,592.7 L674.3,600.3 L676.8,591.4 L680.6,591.4 L685.7,596.5 L690.8,588.4 L693.3,588.9 L697.1,604.1 L702.2,606.6 L704.7,615.4 L708.5,609.1 L713.5,601.5 L718.6,591.4 L724.9,588.9 L731.3,581.3 L736.3,577.5 L742.7,576.2 L747.7,573.7 L751.5,576.2 L754.1,579.2 L759.1,580.0 L761.6,574.9 L764.2,581.3 L768.0,571.1 L771.8,571.1 L776.8,564.8 L781.9,566.1 L787.0,562.3 L790.8,561.0 L794.6,563.5 L798.4,567.3 L804.7,567.3 L808.5,564.8 L812.3,566.1 L814.8,578.7 L819.9,577.5 L822.4,574.9 L826.3,547.1 L827.5,547.1 L830.1,544.6 L835.2,543.3 L840.3,547.1 L845.3,558.5 L849.1,554.7 L852.9,553.4 L858.0,549.6 L863.0,545.8 L866.8,540.8 L870.6,542.0 L875.7,538.2 L882.0,535.7 L887.1,532.7 L890.9,537.0 L893.4,539.5 L897.2,533.2 L901.0,537.0 L904.8,534.4 L907.3,537.0 L911.1,559.7 L913.7,560.5 L917.5,547.1 L922.5,536.2 L927.6,536.2 L933.9,553.4 L939.0,555.9 L942.8,557.2 L946.6,544.6 L950.4,552.2 L954.2,550.9 L959.2,562.3 L964.3,561.0 L968.1,547.1 L971.9,548.4 L974.4,542.0 L977.0,540.8 L979.5,534.4 L984.6,526.8 L988.4,529.4 L990.9,540.8 L993.4,533.2 L995.9,535.7 L998.5,532.7 L1003.5,542.0 L1008.6,534.4 L1013.7,529.9 L1016.3,537.5 L1020.1,531.8 L1023.9,534.3 L1027.7,526.7 L1032.8,527.5 L1037.8,522.9 L1040.4,525.4 L1044.2,539.4 L1049.2,545.7 L1053.0,547.0 L1055.6,558.4 L1058.1,545.7 L1064.4,569.7 L1067.0,558.4 L1070.8,573.5 L1075.8,591.3 L1079.6,593.8 L1083.4,601.4 L1085.9,586.2 L1089.7,579.9 L1092.3,588.7 L1094.8,581.1 L1098.6,582.4 L1101.1,576.1 L1103.7,565.9 L1106.2,565.9 L1110.0,576.1 L1112.5,578.6 L1115.1,591.3 L1118.9,586.2 L1122.7,579.9 L1127.7,652.0 L1131.5,654.6 L1134.1,667.2 L1137.1,606.5 L1140.4,631.8 L1145.4,612.8 L1148.0,614.1 L1151.8,628.0 L1155.6,628.0 L1159.4,647.0 L1164.4,616.6 L1168.2,601.4 L1172.0,597.6 L1177.1,592.5 L1180.9,590.0 L1184.7,577.3 L1189.7,587.5 L1193.5,583.7 L1197.3,579.9 L1199.9,581.1 L1202.5,556.3 L1206.3,551.8 L1210.1,549.1 L1213.9,544.1 L1217.7,545.3 L1221.5,558.0 L1225.3,559.2 L1229.1,563.0 L1232.9,547.8 L1235.4,552.9 L1240.5,549.1 L1243.0,549.1 L1246.8,542.8 L1250.6,542.8 L1253.2,546.6 L1255.7,539.0 L1259.5,537.7 L1262.0,533.9 L1264.6,536.5 L1267.1,532.7 L1269.6,542.3 L1273.4,533.9 L1275.9,541.0 L1281.0,541.0 L1283.5,540.3 L1288.6,525.1 L1292.4,523.8 L1297.5,516.2 L1301.3,511.1 L1303.8,511.1 L1308.9,502.3 L1311.4,502.3 L1315.2,508.6 L1317.7,508.6 L1322.8,502.3 L1326.6,504.8 L1329.1,503.5 L1331.6,506.1 L1338.0,499.7 L1345.6,498.0 L1349.4,492.2 L1354.4,488.4 L1358.2,488.4 L1364.6,493.4 L1368.4,507.3 L1372.2,495.9 L1375.9,498.5 L1377.2,494.7 L1379.7,493.4 L1382.3,488.4 L1384.8,489.6 L1388.6,480.8 L1392.4,478.2 L1393.8,478.5 L1396.2,480.8 L1398.9,481.0 L1402.7,486.1 L1407.7,489.9 L1410.8,478.5 L1414.1,482.3 L1417.8,477.2 L1421.6,474.7 L1425.4,479.7 L1428.0,479.7 L1430.5,484.8 L1436.8,473.4 L1439.4,475.9 L1444.4,472.2 L1447.0,468.4 L1450.8,463.3 L1453.3,463.8 L1457.1,460.0 L1462.2,462.0 L1469.7,447.6 L1474.8,453.2 L1478.6,459.0 L1482.4,453.2 L1490.0,446.3 L1495.1,445.1 L1498.9,443.0 L1501.4,445.6 L1504.4,440.0 L1507.7,443.0 L1509.5,468.4 L1512.8,453.2 L1516.1,453.2 L1519.1,450.6 L1521.6,456.2 L1528.0,443.0 L1531.8,446.8 L1536.8,439.2 L1541.9,424.1 L1545.7,423.3 L1549.5,432.4 L1554.6,429.1 L1558.4,439.2 L1560.9,434.2 L1563.4,444.3 L1566.5,444.3 L1569.7,430.4 L1574.8,428.4 L1577.3,441.8 L1579.9,442.8 L1583.0,449.6 L1586.1,458.0 L1589.1,454.7 L1591.5,468.9 L1594.2,458.7 L1597.2,445.6 L1602.3,433.4 L1605.3,432.4 L1608.4,428.4 L1611.4,433.4 L1617.5,428.4 L1622.5,425.9 L1628.6,430.0 L1631.6,423.9 L1634.3,421.9 L1636.7,431.4 L1640.8,433.4 L1643.8,436.5 L1645.2,445.6 L1649.9,429.4 L1654.9,420.3 L1659.0,415.8 L1664.1,415.8 L1669.1,419.2 L1671.1,420.3 L1674.2,426.3 L1676.8,426.3 L1680.3,424.3 L1685.3,414.2 L1688.4,417.2 L1691.4,417.2 L1694.4,411.1 L1697.5,410.1 L1701.5,416.6 L1704.6,414.2 L1709.6,414.6 L1712.7,434.4 L1715.7,423.3 L1718.7,418.6 L1721.8,417.8 L1725.8,412.2 L1728.9,409.1 L1732.9,414.2" fill="none" stroke="#e0260c" stroke-width="2" stroke-linejoin="round"/>
<path d="M255.6,677.2 L261.4,686.1 L266.5,668.4 L271.5,672.2 L275.3,662.0 L282.9,648.1 L286.7,654.4 L291.8,639.2 L295.6,644.3 L301.9,648.1 L307.0,632.9 L317.1,620.3 L324.7,602.5 L329.7,602.5 L334.8,592.4 L341.1,603.8 L346.2,589.9 L353.8,584.8 L362.7,557.0 L370.3,563.3 L377.8,554.4 L382.9,558.2 L388.0,565.8 L391.8,574.7 L395.6,563.3 L401.9,582.3 L405.7,578.5 L414.6,603.8 L422.2,615.2 L428.5,594.9 L433.5,596.2 L439.9,583.5 L444.9,611.4 L450.0,600.0 L453.9,588.9 L457.7,599.0 L461.5,591.4 L465.3,592.7 L467.8,596.5 L472.9,578.7 L476.7,595.2 L481.8,591.4 L485.6,593.9 L490.6,602.8 L494.4,591.4 L498.2,592.7 L502.0,599.0 L507.1,585.1 L512.2,606.6 L515.9,599.0 L518.5,607.8 L522.3,609.1 L524.8,601.5 L527.3,609.1 L531.1,597.7 L534.9,601.5 L537.5,610.4 L541.3,602.8 L546.3,604.1 L550.1,606.6 L552.7,602.8 L556.5,607.8 L561.5,612.9 L566.6,619.2 L571.6,616.7 L576.7,623.0 L583.0,624.3 L589.4,601.5 L593.2,591.4 L597.5,567.3 L602.0,588.9 L607.1,593.9 L609.6,586.3 L614.7,606.6 L621.0,593.9 L624.8,595.2 L628.6,583.8 L636.3,644.6 L637.5,645.8 L640.1,640.8 L642.7,648.4 L645.2,633.2 L649.0,631.9 L651.5,634.4 L655.3,616.7 L659.1,605.3 L664.2,600.3 L668.0,607.8 L671.8,596.5 L674.3,600.3 L676.8,581.3 L680.6,587.6 L685.7,592.7 L690.8,582.5 L693.3,582.5 L697.1,605.3 L700.9,611.6 L704.7,618.0 L707.2,618.0 L712.3,619.2 L717.3,606.6 L724.9,583.8 L727.5,583.8 L730.8,564.8 L735.1,569.9 L738.9,569.9 L742.7,573.7 L746.5,571.1 L750.3,576.2 L755.3,577.5 L760.4,569.9 L764.2,571.1 L768.0,574.9 L770.5,569.9 L774.3,574.9 L779.4,558.5 L781.9,564.8 L785.7,558.5 L790.0,549.6 L797.1,574.9 L799.6,571.1 L802.2,577.5 L804.7,572.4 L807.2,581.3 L809.7,583.8 L813.5,583.8 L817.3,590.1 L822.4,576.2 L826.3,543.3 L830.1,542.0 L835.2,533.2 L839.0,543.3 L844.1,547.1 L846.6,553.4 L849.1,548.4 L852.9,548.4 L855.4,550.9 L858.0,537.0 L860.5,531.9 L863.0,520.5 L868.1,525.6 L871.9,526.1 L874.4,521.8 L877.0,525.6 L879.5,526.8 L883.3,531.9 L887.1,535.7 L889.6,533.2 L894.7,552.2 L897.2,544.6 L899.7,552.2 L903.5,557.2 L907.3,567.3 L911.1,592.7 L914.2,596.5 L917.5,588.9 L921.3,585.1 L923.8,580.0 L926.3,580.0 L928.9,575.7 L933.9,585.8 L939.0,585.8 L942.8,585.1 L945.3,575.7 L947.8,574.9 L950.4,578.7 L952.9,576.2 L956.7,576.7 L959.2,588.9 L961.8,585.1 L965.6,566.1 L969.4,554.7 L973.2,548.4 L975.7,548.4 L978.2,539.5 L984.6,530.6 L987.1,533.2 L989.6,553.4 L993.4,554.7 L995.9,553.4 L998.5,543.3 L1001.0,555.9 L1004.8,564.8 L1008.6,564.8 L1011.1,559.7 L1012.5,559.6 L1013.7,562.3 L1016.3,573.0 L1018.9,568.5 L1021.4,571.0 L1023.9,578.6 L1030.3,571.0 L1035.3,572.3 L1040.4,577.3 L1044.2,598.9 L1048.0,603.9 L1051.8,602.7 L1054.3,600.1 L1055.6,606.5 L1058.1,596.3 L1063.2,636.8 L1067.0,621.6 L1070.8,628.0 L1073.3,628.0 L1075.8,639.4 L1079.6,644.4 L1083.4,658.4 L1087.2,634.3 L1089.7,628.0 L1092.3,633.0 L1094.8,621.6 L1098.6,624.2 L1101.1,630.5 L1104.9,609.0 L1107.5,609.0 L1112.5,622.9 L1115.1,635.6 L1118.9,631.8 L1123.9,614.1 L1129.0,702.7 L1134.1,725.4 L1136.6,664.7 L1140.4,692.5 L1144.2,679.9 L1148.0,681.1 L1150.5,687.5 L1154.3,679.9 L1156.8,679.9 L1159.4,701.4 L1164.4,672.3 L1168.2,649.5 L1172.0,648.2 L1177.1,643.2 L1179.6,648.2 L1184.7,633.0 L1187.2,636.8 L1191.0,644.4 L1194.8,638.1 L1198.6,626.7 L1202.4,596.3 L1203.8,587.1 L1204.9,586.2 L1206.3,592.2 L1210.1,601.0 L1212.7,594.7 L1217.7,599.7 L1221.5,616.2 L1225.3,617.5 L1227.8,621.3 L1230.4,621.3 L1232.9,606.1 L1235.4,613.7 L1240.5,607.3 L1243.0,609.9 L1246.8,601.0 L1249.4,607.3 L1253.2,603.5 L1255.7,598.5 L1258.2,601.0 L1262.0,594.7 L1267.1,592.9 L1269.6,602.3 L1272.2,597.2 L1275.9,604.8 L1281.0,604.8 L1284.8,598.5 L1289.9,594.2 L1292.4,595.9 L1297.5,577.0 L1301.3,574.4 L1303.8,566.8 L1307.6,556.7 L1310.1,555.4 L1313.9,561.8 L1319.0,550.4 L1323.5,542.8 L1327.8,550.4 L1331.6,564.3 L1335.4,560.5 L1338.0,551.6 L1340.5,550.4 L1343.0,556.7 L1349.4,530.1 L1351.9,528.9 L1355.7,516.2 L1359.5,514.9 L1363.3,527.6 L1368.4,531.4 L1372.2,521.3 L1377.2,521.8 L1379.7,525.1 L1382.3,523.8 L1386.1,526.3 L1388.6,506.1 L1391.1,499.7 L1392.5,501.3 L1396.3,511.9 L1402.7,507.6 L1405.2,512.7 L1407.7,512.7 L1410.8,493.2 L1414.1,496.2 L1417.8,489.9 L1421.6,488.6 L1425.4,495.7 L1430.5,495.7 L1433.5,500.0 L1436.8,486.1 L1439.4,489.9 L1441.9,488.6 L1444.4,498.2 L1447.0,494.9 L1450.8,477.2 L1454.6,489.9 L1457.1,492.4 L1462.2,494.9 L1464.7,486.1 L1468.5,495.7 L1472.3,493.2 L1474.8,498.7 L1478.6,503.3 L1482.4,493.2 L1486.2,495.7 L1490.0,491.1 L1496.3,486.1 L1499.4,486.1 L1501.9,494.9 L1504.4,486.1 L1509.5,519.0 L1512.8,501.3 L1517.8,489.9 L1521.6,500.0 L1524.2,500.0 L1529.2,492.4 L1533.0,498.7 L1540.6,483.5 L1544.4,488.6 L1547.0,488.6 L1549.5,515.2 L1552.0,493.7 L1554.6,497.5 L1558.4,508.9 L1560.9,500.0 L1563.4,505.1 L1569.7,493.7 L1574.8,487.3 L1577.3,502.5 L1579.9,502.8 L1583.4,523.8 L1586.1,523.1 L1587.5,524.1 L1589.1,525.6 L1591.5,539.7 L1594.2,523.5 L1597.2,519.5 L1600.3,506.3 L1603.3,498.2 L1606.3,497.2 L1608.4,493.2 L1611.4,496.2 L1614.4,497.2 L1617.5,485.1 L1622.5,477.0 L1626.6,486.1 L1628.6,488.1 L1630.6,474.9 L1633.7,472.5 L1636.7,486.1 L1639.7,489.1 L1642.8,497.2 L1645.2,509.4 L1648.9,505.3 L1653.9,496.8 L1657.0,497.2 L1661.0,496.2 L1665.1,498.2 L1668.1,503.3 L1671.1,506.3 L1674.2,511.0 L1676.8,511.0 L1681.3,480.0 L1684.9,473.9 L1688.4,490.1 L1693.4,462.8 L1698.5,454.3 L1701.5,457.7 L1704.6,448.6 L1707.6,447.0 L1710.6,447.6 L1713.7,466.8 L1716.7,442.9 L1719.7,444.2 L1723.8,455.7 L1726.8,458.7 L1729.9,456.7 L1732.9,464.8" fill="none" stroke="#11873a" stroke-width="2" stroke-linejoin="round"/>
<path d="M255.6,674.7 L258.9,669.6 L261.4,677.2 L263.9,668.4 L269.0,686.1 L275.3,679.7 L279.1,688.6 L282.9,674.7 L286.7,687.3 L291.8,674.7 L298.1,673.4 L301.9,675.9 L307.0,664.6 L312.0,665.8 L323.4,649.4 L329.7,672.2 L333.5,659.5 L338.6,660.8 L346.2,644.3 L348.7,650.6 L353.8,640.5 L362.7,624.1 L366.5,630.4 L371.5,631.6 L376.6,610.1 L380.4,611.4 L386.7,619.0 L391.8,624.1 L398.1,613.4 L401.9,619.0 L408.2,640.5 L414.6,649.4 L419.6,649.4 L428.5,630.4 L437.3,639.2 L439.9,630.4 L444.9,643.0 L450.0,639.2 L456.5,625.6 L459.0,626.8 L464.1,619.2 L467.8,620.5 L472.9,625.6 L474.2,629.4 L478.0,619.2 L480.5,620.5 L484.3,625.6 L486.8,625.6 L490.6,638.2 L494.4,631.9 L499.5,633.2 L502.0,640.8 L507.1,623.0 L513.4,634.4 L518.5,634.4 L522.3,638.2 L524.8,633.2 L529.9,635.7 L534.9,652.2 L538.7,648.4 L542.5,647.1 L547.6,647.1 L552.7,631.9 L555.2,644.6 L560.3,645.8 L566.6,654.7 L571.6,650.9 L574.2,651.6 L578.0,657.2 L580.5,652.2 L584.3,655.9 L593.2,633.2 L595.7,631.9 L600.8,615.4 L605.8,629.4 L608.4,624.3 L612.2,634.4 L617.2,633.2 L621.0,625.6 L623.5,626.8 L626.1,623.0 L629.9,631.9 L636.3,669.9 L637.5,669.9 L640.1,669.4 L642.7,672.4 L645.2,661.0 L647.7,659.7 L651.5,666.1 L654.1,659.7 L656.6,658.5 L660.4,652.2 L665.4,640.8 L668.0,644.6 L670.5,637.0 L674.3,637.0 L676.8,623.0 L680.6,619.2 L685.7,616.7 L690.8,613.7 L693.3,614.2 L697.1,623.0 L700.9,619.2 L704.7,637.0 L707.2,634.4 L711.0,643.3 L714.8,640.8 L718.6,633.2 L722.4,624.3 L727.5,621.8 L730.8,611.6 L733.8,619.2 L738.9,620.5 L741.4,631.9 L746.5,614.2 L750.3,618.0 L752.8,615.4 L759.1,630.6 L761.6,618.0 L764.2,630.6 L768.0,633.2 L771.8,626.8 L779.4,616.7 L781.9,623.0 L785.7,615.4 L788.2,615.4 L793.3,626.8 L795.8,618.0 L799.6,620.5 L802.2,621.8 L804.7,633.2 L807.2,626.8 L809.7,635.7 L812.3,637.0 L816.1,647.1 L818.6,647.1 L823.7,638.2 L825.1,637.0 L830.1,631.9 L834.7,618.0 L837.7,633.2 L840.3,628.1 L844.1,631.9 L847.8,631.9 L851.6,639.5 L856.7,630.6 L863.0,618.0 L865.6,628.1 L870.6,625.6 L873.2,625.6 L877.0,621.8 L879.5,625.6 L883.3,638.2 L887.1,642.0 L890.9,638.2 L894.7,645.8 L897.2,644.6 L901.0,647.1 L907.3,659.7 L911.1,681.3 L913.7,685.1 L917.5,674.9 L922.5,667.3 L926.3,668.6 L930.1,669.9 L933.9,674.9 L936.5,672.4 L939.0,673.7 L942.8,676.2 L946.6,672.4 L951.6,673.7 L954.2,676.2 L956.7,674.9 L959.2,681.3 L961.8,669.9 L968.1,662.3 L973.2,660.3 L978.2,654.7 L980.8,661.0 L983.3,655.9 L985.8,658.5 L989.6,644.6 L992.2,661.0 L998.5,660.3 L1002.3,669.9 L1004.8,677.5 L1007.3,677.5 L1012.4,691.4 L1013.8,691.3 L1018.8,696.4 L1020.1,697.6 L1023.9,705.2 L1027.7,695.1 L1032.8,695.1 L1039.1,693.8 L1042.9,696.3 L1048.0,688.7 L1051.8,692.5 L1056.8,692.5 L1063.2,709.0 L1068.2,692.5 L1074.6,678.6 L1079.6,700.1 L1083.4,701.4 L1088.5,682.4 L1091.0,682.4 L1094.8,677.3 L1099.9,683.7 L1103.7,677.3 L1107.5,674.8 L1111.3,673.5 L1113.8,678.6 L1118.9,673.5 L1122.7,673.5 L1127.7,720.4 L1134.1,739.4 L1136.6,707.7 L1140.4,720.4 L1145.4,698.9 L1150.5,712.8 L1154.3,703.9 L1156.8,703.9 L1159.4,712.8 L1163.2,700.1 L1168.2,688.7 L1172.0,693.8 L1177.1,686.2 L1182.2,693.8 L1185.9,687.5 L1188.5,692.5 L1193.5,691.3 L1198.6,682.4 L1202.1,668.0 L1204.7,662.1 L1207.3,670.2 L1212.8,656.5 L1215.5,658.4 L1219.1,659.3 L1221.9,670.2 L1224.6,674.8 L1227.3,675.7 L1230.1,675.7 L1232.8,664.7 L1235.5,670.2 L1238.3,668.4 L1241.9,665.6 L1244.6,666.6 L1247.4,664.7 L1252.8,673.8 L1255.6,673.8 L1258.3,675.7 L1262.8,672.9 L1266.5,670.2 L1270.1,667.5 L1272.9,659.3 L1275.6,663.8 L1280.1,663.8 L1284.7,663.8 L1287.4,661.1 L1290.2,661.1 L1292.0,669.3 L1294.7,662.9 L1298.4,662.0 L1301.1,659.3 L1304.7,644.7 L1306.6,642.9 L1309.3,645.6 L1312.0,645.6 L1314.8,654.7 L1318.4,649.3 L1323.0,650.2 L1326.6,652.0 L1329.3,652.9 L1332.1,664.7 L1334.8,664.7 L1340.3,656.5 L1343.0,659.3 L1345.7,658.4 L1348.5,646.5 L1351.2,651.1 L1353.9,651.1 L1357.6,658.4 L1360.3,659.3 L1363.9,659.3 L1368.5,663.8 L1371.2,654.7 L1374.0,648.3 L1376.7,660.2 L1380.3,647.4 L1383.1,642.9 L1385.8,639.2 L1388.5,639.2 L1391.3,624.7 L1392.5,625.3 L1396.1,626.3 L1400.1,629.1 L1405.2,617.7 L1407.7,616.5 L1411.5,606.3 L1415.3,607.6 L1419.1,604.6 L1424.2,607.1 L1428.0,607.1 L1430.5,612.7 L1435.6,610.6 L1439.4,603.8 L1441.9,603.8 L1447.0,616.5 L1450.8,607.1 L1457.1,608.1 L1460.9,610.1 L1464.7,609.6 L1467.2,611.4 L1471.0,616.5 L1474.8,602.5 L1477.3,602.5 L1481.1,594.4 L1484.9,600.0 L1487.5,601.3 L1493.8,597.5 L1498.9,589.9 L1501.4,589.9 L1506.5,603.8 L1510.3,621.5 L1514.1,610.1 L1517.8,598.7 L1520.4,603.8 L1522.9,597.5 L1526.7,593.7 L1531.8,582.3 L1535.6,577.2 L1538.1,565.8 L1541.9,574.7 L1547.0,586.1 L1550.8,587.3 L1557.1,594.9 L1560.9,596.2 L1563.4,601.3 L1567.2,587.3 L1569.7,587.3 L1577.3,572.2 L1579.9,574.4 L1583.4,583.9 L1586.1,576.7 L1589.1,577.2 L1591.5,588.4 L1594.2,573.2 L1597.2,573.8 L1600.3,553.9 L1603.3,550.9 L1606.3,550.9 L1608.4,548.9 L1612.4,552.9 L1617.5,558.0 L1620.5,562.0 L1623.5,561.4 L1625.6,565.7 L1628.6,559.0 L1631.6,552.9 L1633.7,539.7 L1636.7,537.7 L1639.7,538.7 L1642.8,549.5 L1645.8,544.8 L1649.9,541.8 L1653.9,536.7 L1657.0,538.1 L1660.0,536.7 L1663.0,536.1 L1665.1,533.7 L1668.1,536.7 L1671.1,539.7 L1674.2,545.8 L1676.8,545.4 L1681.3,533.7 L1684.9,523.5 L1687.3,530.6 L1690.4,510.4 L1693.4,509.4 L1698.5,499.2 L1701.5,492.2 L1704.6,488.5 L1707.6,504.3 L1712.7,503.3 L1715.7,486.1 L1718.7,480.6 L1721.8,478.0 L1724.8,475.9 L1727.4,449.6 L1729.9,467.8 L1732.9,468.9" fill="none" stroke="#c020c0" stroke-width="2" stroke-linejoin="round"/>
<line x1="1733.5" y1="410" x2="1733.5" y2="742" stroke="#111" stroke-width="1.5"/>
<line x1="255" y1="741.5" x2="1734" y2="741.5" stroke="#111" stroke-width="1.5"/>
<line x1="1733" y1="410.5" x2="1738" y2="410.5" stroke="#111" stroke-width="1.5"/>
<text x="1762" y="413.9" font-size="12" fill="#222" text-anchor="middle" font-family="Liberation Sans">46.22%</text>
<line x1="1733" y1="447.4" x2="1738" y2="447.4" stroke="#111" stroke-width="1.5"/>
<text x="1762" y="450.79999999999995" font-size="12" fill="#222" text-anchor="middle" font-family="Liberation Sans">40.00%</text>
<line x1="1733" y1="507.2" x2="1738" y2="507.2" stroke="#111" stroke-width="1.5"/>
<text x="1762" y="510.59999999999997" font-size="12" fill="#222" text-anchor="middle" font-family="Liberation Sans">30.00%</text>
<line x1="1733" y1="566.8" x2="1738" y2="566.8" stroke="#111" stroke-width="1.5"/>
<text x="1762" y="570.1999999999999" font-size="12" fill="#222" text-anchor="middle" font-family="Liberation Sans">20.00%</text>
<line x1="1733" y1="626.5" x2="1738" y2="626.5" stroke="#111" stroke-width="1.5"/>
<text x="1762" y="629.9" font-size="12" fill="#222" text-anchor="middle" font-family="Liberation Sans">10.00%</text>
<line x1="1733" y1="686.3" x2="1738" y2="686.3" stroke="#111" stroke-width="1.5"/>
<text x="1762" y="689.6999999999999" font-size="12" fill="#222" text-anchor="middle" font-family="Liberation Sans">0.00%</text>
<line x1="1733" y1="741.3" x2="1738" y2="741.3" stroke="#111" stroke-width="1.5"/>
<text x="1762" y="744.6999999999999" font-size="12" fill="#222" text-anchor="middle" font-family="Liberation Sans">-9.24%</text>
<line x1="256" y1="741" x2="256" y2="746.5" stroke="#111" stroke-width="1.5"/>
<text x="256" y="760" font-size="12" fill="#222" text-anchor="middle" font-family="Liberation Sans">Jan 29</text>
<line x1="382.5" y1="741" x2="382.5" y2="746.5" stroke="#111" stroke-width="1.5"/>
<text x="382.5" y="760" font-size="12" fill="#222" text-anchor="middle" font-family="Liberation Sans">Apr 1</text>
<line x1="566.5" y1="741" x2="566.5" y2="746.5" stroke="#111" stroke-width="1.5"/>
<text x="566.5" y="760" font-size="12" fill="#222" text-anchor="middle" font-family="Liberation Sans">Jul 1</text>
<line x1="752" y1="741" x2="752" y2="746.5" stroke="#111" stroke-width="1.5"/>
<text x="752" y="760" font-size="12" fill="#222" text-anchor="middle" font-family="Liberation Sans">Oct 1</text>
<line x1="938.5" y1="741" x2="938.5" y2="746.5" stroke="#111" stroke-width="1.5"/>
<text x="938.5" y="760" font-size="12" fill="#222" text-anchor="middle" font-family="Liberation Sans">Jan 1</text>
<line x1="1119.5" y1="741" x2="1119.5" y2="746.5" stroke="#111" stroke-width="1.5"/>
<text x="1119.5" y="760" font-size="12" fill="#222" text-anchor="middle" font-family="Liberation Sans">Apr 1</text>
<line x1="1303.5" y1="741" x2="1303.5" y2="746.5" stroke="#111" stroke-width="1.5"/>
<text x="1303.5" y="760" font-size="12" fill="#222" text-anchor="middle" font-family="Liberation Sans">Jul 1</text>
<line x1="1489.5" y1="741" x2="1489.5" y2="746.5" stroke="#111" stroke-width="1.5"/>
<text x="1489.5" y="760" font-size="12" fill="#222" text-anchor="middle" font-family="Liberation Sans">Oct 1</text>
<line x1="1676.5" y1="741" x2="1676.5" y2="746.5" stroke="#111" stroke-width="1.5"/>
<text x="1676.5" y="760" font-size="12" fill="#222" text-anchor="middle" font-family="Liberation Sans">Jan 1</text>
<line x1="256" y1="815.5" x2="1741" y2="815.5" stroke="#dedede" stroke-width="1"/>
<line x1="256" y1="839.5" x2="1741" y2="839.5" stroke="#dedede" stroke-width="1"/>
<line x1="255.5" y1="815" x2="255.5" y2="976" stroke="#dedede" stroke-width="1"/>
<path d="M255.5,853.6 L258.0,853.1 L260.5,853.0 L263.0,852.0 L265.5,852.5 L268.0,851.9 L270.5,851.2 L273.0,851.6 L275.5,851.1 L278.0,851.0 L280.5,849.6 L283.0,850.0 L285.5,850.3 L288.0,850.2 L290.5,848.3 L293.0,848.2 L295.5,848.5 L298.0,849.1 L300.5,847.9 L303.0,847.5 L305.5,848.0 L308.0,845.9 L310.5,846.9 L313.0,845.0 L315.5,843.7 L318.0,843.0 L320.5,842.8 L323.0,842.8 L325.5,841.4 L328.0,841.7 L330.5,841.9 L333.0,842.0 L335.5,841.3 L338.0,840.4 L340.5,840.1 L343.0,840.1 L345.5,839.9 L348.0,839.1 L350.5,838.5 L353.0,838.4 L355.5,837.4 L358.0,836.8 L360.5,836.7 L363.0,835.7 L365.5,834.0 L368.0,834.9 L370.5,835.7 L373.0,836.4 L375.5,834.9 L378.0,833.4 L380.5,834.0 L383.0,833.4 L385.5,834.9 L388.0,836.0 L390.5,835.3 L393.0,835.8 L395.5,834.0 L398.0,834.7 L400.5,835.9 L403.0,837.2 L405.5,839.1 L408.0,839.5 L410.5,840.9 L413.0,841.6 L415.5,842.6 L418.0,843.0 L420.5,843.1 L423.0,842.2 L425.5,841.5 L428.0,840.6 L430.5,839.8 L433.0,840.5 L435.5,839.9 L438.0,840.2 L440.5,840.1 L443.0,842.0 L445.5,843.4 L448.0,842.6 L450.5,840.7 L453.0,841.3 L455.5,840.2 L458.0,839.4 L460.5,839.0 L463.0,840.4 L465.5,838.4 L468.0,838.7 L470.5,839.0 L473.0,840.1 L475.5,838.6 L478.0,839.8 L480.5,839.9 L483.0,840.6 L485.5,840.8 L488.0,842.0 L490.5,840.9 L493.0,840.5 L495.5,839.9 L498.0,841.1 L500.5,841.1 L503.0,839.2 L505.5,838.8 L508.0,839.5 L510.5,840.6 L513.0,841.2 L515.5,842.0 L518.0,841.7 L520.5,841.3 L523.0,842.3 L525.5,841.7 L528.0,842.7 L530.5,843.3 L533.0,842.9 L535.5,843.1 L538.0,844.6 L540.5,843.7 L543.0,842.8 L545.5,843.4 L548.0,842.9 L550.5,843.3 L553.0,842.9 L555.5,843.2 L558.0,843.2 L560.5,842.8 L563.0,844.2 L565.5,843.7 L568.0,844.4 L570.5,845.1 L573.0,844.3 L575.5,845.0 L578.0,844.5 L580.5,845.2 L583.0,844.8 L585.5,844.3 L588.0,843.3 L590.5,841.5 L593.0,842.1 L595.5,840.1 L598.0,837.6 L600.5,838.2 L603.0,839.1 L605.5,839.4 L608.0,839.5 L610.5,842.2 L613.0,842.8 L615.5,841.7 L618.0,841.9 L620.5,840.4 L623.0,840.0 L625.5,839.9 L628.0,839.2 L630.5,839.6 L633.0,841.6 L635.5,844.5 L638.0,850.0 L640.5,849.6 L643.0,849.6 L645.5,849.3 L648.0,847.7 L650.5,848.1 L653.0,847.9 L655.5,846.3 L658.0,844.7 L660.5,843.8 L663.0,843.2 L665.5,842.8 L668.0,842.5 L670.5,841.6 L673.0,842.0 L675.5,839.7 L678.0,839.2 L680.5,840.3 L683.0,840.5 L685.5,839.4 L688.0,839.3 L690.5,839.2 L693.0,839.8 L695.5,838.6 L698.0,840.7 L700.5,841.7 L703.0,841.6 L705.5,842.7 L708.0,844.6 L710.5,844.2 L713.0,844.6 L715.5,845.5 L718.0,843.0 L720.5,842.6 L723.0,841.1 L725.5,840.6 L728.0,838.4 L730.5,836.6 L733.0,836.2 L735.5,835.5 L738.0,836.0 L740.5,837.3 L743.0,838.6 L745.5,838.6 L748.0,837.4 L750.5,837.6 L753.0,838.0 L755.5,836.8 L758.0,838.3 L760.5,838.0 L763.0,838.4 L765.5,838.2 L768.0,837.8 L770.5,837.2 L773.0,838.0 L775.5,836.6 L778.0,837.2 L780.5,837.2 L783.0,836.3 L785.5,835.3 L788.0,836.1 L790.5,836.5 L793.0,835.4 L795.5,835.5 L798.0,835.8 L800.5,838.1 L803.0,838.0 L805.5,837.9 L808.0,839.5 L810.5,840.3 L813.0,839.6 L815.5,839.5 L818.0,840.5 L820.5,840.7 L823.0,840.0 L825.5,839.4 L828.0,836.5 L830.5,834.7 L833.0,835.4 L835.5,834.3 L838.0,834.9 L840.5,835.3 L843.0,834.5 L845.5,834.5 L848.0,835.5 L850.5,834.6 L853.0,835.4 L855.5,834.4 L858.0,834.8 L860.5,833.1 L863.0,833.8 L865.5,832.1 L868.0,831.6 L870.5,832.7 L873.0,833.1 L875.5,832.2 L878.0,833.3 L880.5,833.4 L883.0,833.4 L885.5,833.5 L888.0,833.6 L890.5,834.7 L893.0,835.0 L895.5,834.3 L898.0,836.6 L900.5,836.3 L903.0,837.4 L905.5,838.5 L908.0,838.3 L910.5,839.1 L913.0,840.7 L915.5,843.0 L918.0,846.0 L920.5,844.0 L923.0,844.8 L925.5,843.3 L928.0,843.4 L930.5,843.5 L933.0,842.9 L935.5,843.5 L938.0,844.0 L940.5,843.5 L943.0,843.1 L945.5,843.4 L948.0,842.8 L950.5,843.0 L953.0,843.1 L955.5,842.7 L958.0,842.9 L960.5,843.2 L963.0,843.2 L965.5,841.4 L968.0,840.6 L970.5,840.1 L973.0,838.5 L975.5,838.1 L978.0,838.5 L980.5,837.8 L983.0,836.7 L985.5,836.0 L988.0,835.7 L990.5,835.4 L993.0,836.5 L995.5,836.8 L998.0,838.5 L1000.5,838.7 L1003.0,839.7 L1005.5,839.7 L1008.0,841.2 L1010.5,841.7 L1013.0,841.1 L1015.5,843.3 L1018.0,843.1 L1020.5,842.2 L1023.0,843.6 L1025.5,842.9 L1028.0,843.7 L1030.5,844.9 L1033.0,844.2 L1035.5,843.0 L1038.0,844.1 L1040.5,843.9 L1043.0,843.5 L1045.5,844.3 L1048.0,844.5 L1050.5,846.6 L1053.0,845.9 L1055.5,848.3 L1058.0,847.7 L1060.5,846.6 L1063.0,847.0 L1065.5,849.3 L1068.0,850.7 L1070.5,851.8 L1073.0,852.2 L1075.5,851.8 L1078.0,851.5 L1080.5,851.2 L1083.0,852.3 L1085.5,853.2 L1088.0,855.2 L1090.5,853.1 L1093.0,850.4 L1095.5,850.3 L1098.0,851.1 L1100.5,850.8 L1103.0,848.7 L1105.5,848.0 L1108.0,849.9 L1110.5,849.6 L1113.0,849.6 L1115.5,848.4 L1118.0,849.5 L1120.5,850.1 L1123.0,849.7 L1125.5,848.4 L1128.0,850.3 L1130.5,852.8 L1133.0,857.5 L1135.5,859.4 L1138.0,864.7 L1140.5,860.3 L1143.0,859.3 L1145.5,858.8 L1148.0,859.2 L1150.5,859.5 L1153.0,860.1 L1155.5,858.6 L1158.0,857.9 L1160.5,859.4 L1163.0,860.1 L1165.5,859.2 L1168.0,856.8 L1170.5,855.5 L1173.0,854.4 L1175.5,852.5 L1178.0,853.1 L1180.5,853.0 L1183.0,852.5 L1185.5,852.6 L1188.0,851.9 L1190.5,851.5 L1193.0,850.7 L1195.5,850.8 L1198.0,849.9 L1200.5,851.0 L1203.0,849.8 L1205.5,846.7 L1208.0,844.3 L1210.5,845.4 L1213.0,843.9 L1215.5,845.0 L1218.0,844.9 L1220.5,845.6 L1223.0,847.5 L1225.5,848.1 L1228.0,848.9 L1230.5,849.1 L1233.0,849.9 L1235.5,848.7 L1238.0,848.6 L1240.5,848.1 L1243.0,847.5 L1245.5,846.4 L1248.0,846.7 L1250.5,845.5 L1253.0,846.1 L1255.5,845.8 L1258.0,846.6 L1260.5,845.1 L1263.0,845.3 L1265.5,845.0 L1268.0,846.9 L1270.5,846.2 L1273.0,846.5 L1275.5,846.0 L1278.0,845.5 L1280.5,845.5 L1283.0,845.0 L1285.5,845.0 L1288.0,844.9 L1290.5,844.9 L1293.0,845.9 L1295.5,844.9 L1298.0,844.1 L1300.5,843.1 L1303.0,842.9 L1305.5,841.3 L1308.0,841.2 L1310.5,839.3 L1313.0,840.1 L1315.5,839.1 L1318.0,839.5 L1320.5,838.1 L1323.0,838.8 L1325.5,838.1 L1328.0,837.7 L1330.5,838.0 L1333.0,839.6 L1335.5,839.5 L1338.0,839.9 L1340.5,840.9 L1343.0,840.2 L1345.5,841.1 L1348.0,840.3 L1350.5,840.4 L1353.0,838.5 L1355.5,838.1 L1358.0,836.7 L1360.5,835.2 L1363.0,834.7 L1365.5,836.0 L1368.0,835.4 L1370.5,836.4 L1373.0,836.7 L1375.5,836.2 L1378.0,836.7 L1380.5,837.3 L1383.0,836.2 L1385.5,835.9 L1388.0,836.1 L1390.5,834.1 L1393.0,835.0 L1395.5,833.5 L1398.0,832.8 L1400.5,832.1 L1403.0,831.8 L1405.5,831.3 L1408.0,832.5 L1410.5,831.6 L1413.0,832.5 L1415.5,830.7 L1418.0,829.1 L1420.5,828.2 L1423.0,828.3 L1425.5,828.1 L1428.0,829.2 L1430.5,828.5 L1433.0,828.8 L1435.5,829.0 L1438.0,829.6 L1440.5,828.9 L1443.0,827.9 L1445.5,829.5 L1448.0,828.5 L1450.5,828.0 L1453.0,828.3 L1455.5,827.7 L1458.0,826.6 L1460.5,828.4 L1463.0,827.4 L1465.5,827.6 L1468.0,827.9 L1470.5,829.3 L1473.0,828.6 L1475.5,829.3 L1478.0,830.0 L1480.5,828.8 L1483.0,828.1 L1485.5,828.9 L1488.0,828.4 L1490.5,828.3 L1493.0,827.8 L1495.5,828.2 L1498.0,827.3 L1500.5,827.1 L1503.0,826.8 L1505.5,827.9 L1508.0,827.4 L1510.5,829.1 L1513.0,829.0 L1515.5,830.5 L1518.0,832.3 L1520.5,831.5 L1523.0,830.7 L1525.5,829.1 L1528.0,827.5 L1530.5,828.3 L1533.0,827.1 L1535.5,827.4 L1538.0,826.4 L1540.5,827.4 L1543.0,825.7 L1545.5,827.6 L1548.0,827.4 L1550.5,826.9 L1553.0,828.7 L1555.5,829.2 L1558.0,829.8 L1560.5,829.5 L1563.0,829.2 L1565.5,829.4 L1568.0,831.0 L1570.5,829.2 L1573.0,829.3 L1575.5,827.9 L1578.0,827.7 L1580.5,828.7 L1583.0,827.3 L1585.5,829.2 L1588.0,828.7 L1590.5,831.0 L1593.0,831.4 L1595.5,831.5 L1598.0,834.2 L1600.5,831.9 L1603.0,829.2 L1605.5,827.5 L1608.0,827.0 L1610.5,825.8 L1613.0,825.6 L1615.5,825.6 L1618.0,825.7 L1620.5,825.6 L1623.0,826.3 L1625.5,824.1 L1628.0,825.6 L1630.5,825.3 L1633.0,823.9 L1635.5,824.6 L1638.0,823.5 L1640.5,823.8 L1643.0,823.5 L1645.5,823.8 L1648.0,825.4 L1650.5,826.5 L1653.0,826.9 L1655.5,826.6 L1658.0,826.9 L1660.5,826.6 L1663.0,825.8 L1665.5,825.2 L1668.0,826.8 L1670.5,825.0 L1673.0,826.5 L1675.5,826.3 L1678.0,826.5 L1680.5,827.4 L1683.0,827.2 L1685.5,827.3 L1688.0,826.0 L1690.5,824.4 L1693.0,822.5 L1695.5,822.6 L1698.0,822.9 L1700.5,822.0 L1703.0,819.6 L1705.5,818.1 L1708.0,816.0 L1710.5,817.3 L1713.0,815.9 L1715.5,817.1 L1718.0,816.7 L1720.5,816.3 L1723.0,815.8 L1725.5,818.0 L1728.0,815.8 L1730.5,816.0 L1733.0,815.4 L1735.5,815.1 L1738.0,816.4 L1741.0,816.5 L1741,976 L255.5,976 Z" fill="#407fb9"/><path d="M255.5,853.6 L258.0,853.1 L260.5,853.0 L263.0,852.0 L265.5,852.5 L268.0,851.9 L270.5,851.2 L273.0,851.6 L275.5,851.1 L278.0,851.0 L280.5,849.6 L283.0,850.0 L285.5,850.3 L288.0,850.2 L290.5,848.3 L293.0,848.2 L295.5,848.5 L298.0,849.1 L300.5,847.9 L303.0,847.5 L305.5,848.0 L308.0,845.9 L310.5,846.9 L313.0,845.0 L315.5,843.7 L318.0,843.0 L320.5,842.8 L323.0,842.8 L325.5,841.4 L328.0,841.7 L330.5,841.9 L333.0,842.0 L335.5,841.3 L338.0,840.4 L340.5,840.1 L343.0,840.1 L345.5,839.9 L348.0,839.1 L350.5,838.5 L353.0,838.4 L355.5,837.4 L358.0,836.8 L360.5,836.7 L363.0,835.7 L365.5,834.0 L368.0,834.9 L370.5,835.7 L373.0,836.4 L375.5,834.9 L378.0,833.4 L380.5,834.0 L383.0,833.4 L385.5,834.9 L388.0,836.0 L390.5,835.3 L393.0,835.8 L395.5,834.0 L398.0,834.7 L400.5,835.9 L403.0,837.2 L405.5,839.1 L408.0,839.5 L410.5,840.9 L413.0,841.6 L415.5,842.6 L418.0,843.0 L420.5,843.1 L423.0,842.2 L425.5,841.5 L428.0,840.6 L430.5,839.8 L433.0,840.5 L435.5,839.9 L438.0,840.2 L440.5,840.1 L443.0,842.0 L445.5,843.4 L448.0,842.6 L450.5,840.7 L453.0,841.3 L455.5,840.2 L458.0,839.4 L460.5,839.0 L463.0,840.4 L465.5,838.4 L468.0,838.7 L470.5,839.0 L473.0,840.1 L475.5,838.6 L478.0,839.8 L480.5,839.9 L483.0,840.6 L485.5,840.8 L488.0,842.0 L490.5,840.9 L493.0,840.5 L495.5,839.9 L498.0,841.1 L500.5,841.1 L503.0,839.2 L505.5,838.8 L508.0,839.5 L510.5,840.6 L513.0,841.2 L515.5,842.0 L518.0,841.7 L520.5,841.3 L523.0,842.3 L525.5,841.7 L528.0,842.7 L530.5,843.3 L533.0,842.9 L535.5,843.1 L538.0,844.6 L540.5,843.7 L543.0,842.8 L545.5,843.4 L548.0,842.9 L550.5,843.3 L553.0,842.9 L555.5,843.2 L558.0,843.2 L560.5,842.8 L563.0,844.2 L565.5,843.7 L568.0,844.4 L570.5,845.1 L573.0,844.3 L575.5,845.0 L578.0,844.5 L580.5,845.2 L583.0,844.8 L585.5,844.3 L588.0,843.3 L590.5,841.5 L593.0,842.1 L595.5,840.1 L598.0,837.6 L600.5,838.2 L603.0,839.1 L605.5,839.4 L608.0,839.5 L610.5,842.2 L613.0,842.8 L615.5,841.7 L618.0,841.9 L620.5,840.4 L623.0,840.0 L625.5,839.9 L628.0,839.2 L630.5,839.6 L633.0,841.6 L635.5,844.5 L638.0,850.0 L640.5,849.6 L643.0,849.6 L645.5,849.3 L648.0,847.7 L650.5,848.1 L653.0,847.9 L655.5,846.3 L658.0,844.7 L660.5,843.8 L663.0,843.2 L665.5,842.8 L668.0,842.5 L670.5,841.6 L673.0,842.0 L675.5,839.7 L678.0,839.2 L680.5,840.3 L683.0,840.5 L685.5,839.4 L688.0,839.3 L690.5,839.2 L693.0,839.8 L695.5,838.6 L698.0,840.7 L700.5,841.7 L703.0,841.6 L705.5,842.7 L708.0,844.6 L710.5,844.2 L713.0,844.6 L715.5,845.5 L718.0,843.0 L720.5,842.6 L723.0,841.1 L725.5,840.6 L728.0,838.4 L730.5,836.6 L733.0,836.2 L735.5,835.5 L738.0,836.0 L740.5,837.3 L743.0,838.6 L745.5,838.6 L748.0,837.4 L750.5,837.6 L753.0,838.0 L755.5,836.8 L758.0,838.3 L760.5,838.0 L763.0,838.4 L765.5,838.2 L768.0,837.8 L770.5,837.2 L773.0,838.0 L775.5,836.6 L778.0,837.2 L780.5,837.2 L783.0,836.3 L785.5,835.3 L788.0,836.1 L790.5,836.5 L793.0,835.4 L795.5,835.5 L798.0,835.8 L800.5,838.1 L803.0,838.0 L805.5,837.9 L808.0,839.5 L810.5,840.3 L813.0,839.6 L815.5,839.5 L818.0,840.5 L820.5,840.7 L823.0,840.0 L825.5,839.4 L828.0,836.5 L830.5,834.7 L833.0,835.4 L835.5,834.3 L838.0,834.9 L840.5,835.3 L843.0,834.5 L845.5,834.5 L848.0,835.5 L850.5,834.6 L853.0,835.4 L855.5,834.4 L858.0,834.8 L860.5,833.1 L863.0,833.8 L865.5,832.1 L868.0,831.6 L870.5,832.7 L873.0,833.1 L875.5,832.2 L878.0,833.3 L880.5,833.4 L883.0,833.4 L885.5,833.5 L888.0,833.6 L890.5,834.7 L893.0,835.0 L895.5,834.3 L898.0,836.6 L900.5,836.3 L903.0,837.4 L905.5,838.5 L908.0,838.3 L910.5,839.1 L913.0,840.7 L915.5,843.0 L918.0,846.0 L920.5,844.0 L923.0,844.8 L925.5,843.3 L928.0,843.4 L930.5,843.5 L933.0,842.9 L935.5,843.5 L938.0,844.0 L940.5,843.5 L943.0,843.1 L945.5,843.4 L948.0,842.8 L950.5,843.0 L953.0,843.1 L955.5,842.7 L958.0,842.9 L960.5,843.2 L963.0,843.2 L965.5,841.4 L968.0,840.6 L970.5,840.1 L973.0,838.5 L975.5,838.1 L978.0,838.5 L980.5,837.8 L983.0,836.7 L985.5,836.0 L988.0,835.7 L990.5,835.4 L993.0,836.5 L995.5,836.8 L998.0,838.5 L1000.5,838.7 L1003.0,839.7 L1005.5,839.7 L1008.0,841.2 L1010.5,841.7 L1013.0,841.1 L1015.5,843.3 L1018.0,843.1 L1020.5,842.2 L1023.0,843.6 L1025.5,842.9 L1028.0,843.7 L1030.5,844.9 L1033.0,844.2 L1035.5,843.0 L1038.0,844.1 L1040.5,843.9 L1043.0,843.5 L1045.5,844.3 L1048.0,844.5 L1050.5,846.6 L1053.0,845.9 L1055.5,848.3 L1058.0,847.7 L1060.5,846.6 L1063.0,847.0 L1065.5,849.3 L1068.0,850.7 L1070.5,851.8 L1073.0,852.2 L1075.5,851.8 L1078.0,851.5 L1080.5,851.2 L1083.0,852.3 L1085.5,853.2 L1088.0,855.2 L1090.5,853.1 L1093.0,850.4 L1095.5,850.3 L1098.0,851.1 L1100.5,850.8 L1103.0,848.7 L1105.5,848.0 L1108.0,849.9 L1110.5,849.6 L1113.0,849.6 L1115.5,848.4 L1118.0,849.5 L1120.5,850.1 L1123.0,849.7 L1125.5,848.4 L1128.0,850.3 L1130.5,852.8 L1133.0,857.5 L1135.5,859.4 L1138.0,864.7 L1140.5,860.3 L1143.0,859.3 L1145.5,858.8 L1148.0,859.2 L1150.5,859.5 L1153.0,860.1 L1155.5,858.6 L1158.0,857.9 L1160.5,859.4 L1163.0,860.1 L1165.5,859.2 L1168.0,856.8 L1170.5,855.5 L1173.0,854.4 L1175.5,852.5 L1178.0,853.1 L1180.5,853.0 L1183.0,852.5 L1185.5,852.6 L1188.0,851.9 L1190.5,851.5 L1193.0,850.7 L1195.5,850.8 L1198.0,849.9 L1200.5,851.0 L1203.0,849.8 L1205.5,846.7 L1208.0,844.3 L1210.5,845.4 L1213.0,843.9 L1215.5,845.0 L1218.0,844.9 L1220.5,845.6 L1223.0,847.5 L1225.5,848.1 L1228.0,848.9 L1230.5,849.1 L1233.0,849.9 L1235.5,848.7 L1238.0,848.6 L1240.5,848.1 L1243.0,847.5 L1245.5,846.4 L1248.0,846.7 L1250.5,845.5 L1253.0,846.1 L1255.5,845.8 L1258.0,846.6 L1260.5,845.1 L1263.0,845.3 L1265.5,845.0 L1268.0,846.9 L1270.5,846.2 L1273.0,846.5 L1275.5,846.0 L1278.0,845.5 L1280.5,845.5 L1283.0,845.0 L1285.5,845.0 L1288.0,844.9 L1290.5,844.9 L1293.0,845.9 L1295.5,844.9 L1298.0,844.1 L1300.5,843.1 L1303.0,842.9 L1305.5,841.3 L1308.0,841.2 L1310.5,839.3 L1313.0,840.1 L1315.5,839.1 L1318.0,839.5 L1320.5,838.1 L1323.0,838.8 L1325.5,838.1 L1328.0,837.7 L1330.5,838.0 L1333.0,839.6 L1335.5,839.5 L1338.0,839.9 L1340.5,840.9 L1343.0,840.2 L1345.5,841.1 L1348.0,840.3 L1350.5,840.4 L1353.0,838.5 L1355.5,838.1 L1358.0,836.7 L1360.5,835.2 L1363.0,834.7 L1365.5,836.0 L1368.0,835.4 L1370.5,836.4 L1373.0,836.7 L1375.5,836.2 L1378.0,836.7 L1380.5,837.3 L1383.0,836.2 L1385.5,835.9 L1388.0,836.1 L1390.5,834.1 L1393.0,835.0 L1395.5,833.5 L1398.0,832.8 L1400.5,832.1 L1403.0,831.8 L1405.5,831.3 L1408.0,832.5 L1410.5,831.6 L1413.0,832.5 L1415.5,830.7 L1418.0,829.1 L1420.5,828.2 L1423.0,828.3 L1425.5,828.1 L1428.0,829.2 L1430.5,828.5 L1433.0,828.8 L1435.5,829.0 L1438.0,829.6 L1440.5,828.9 L1443.0,827.9 L1445.5,829.5 L1448.0,828.5 L1450.5,828.0 L1453.0,828.3 L1455.5,827.7 L1458.0,826.6 L1460.5,828.4 L1463.0,827.4 L1465.5,827.6 L1468.0,827.9 L1470.5,829.3 L1473.0,828.6 L1475.5,829.3 L1478.0,830.0 L1480.5,828.8 L1483.0,828.1 L1485.5,828.9 L1488.0,828.4 L1490.5,828.3 L1493.0,827.8 L1495.5,828.2 L1498.0,827.3 L1500.5,827.1 L1503.0,826.8 L1505.5,827.9 L1508.0,827.4 L1510.5,829.1 L1513.0,829.0 L1515.5,830.5 L1518.0,832.3 L1520.5,831.5 L1523.0,830.7 L1525.5,829.1 L1528.0,827.5 L1530.5,828.3 L1533.0,827.1 L1535.5,827.4 L1538.0,826.4 L1540.5,827.4 L1543.0,825.7 L1545.5,827.6 L1548.0,827.4 L1550.5,826.9 L1553.0,828.7 L1555.5,829.2 L1558.0,829.8 L1560.5,829.5 L1563.0,829.2 L1565.5,829.4 L1568.0,831.0 L1570.5,829.2 L1573.0,829.3 L1575.5,827.9 L1578.0,827.7 L1580.5,828.7 L1583.0,827.3 L1585.5,829.2 L1588.0,828.7 L1590.5,831.0 L1593.0,831.4 L1595.5,831.5 L1598.0,834.2 L1600.5,831.9 L1603.0,829.2 L1605.5,827.5 L1608.0,827.0 L1610.5,825.8 L1613.0,825.6 L1615.5,825.6 L1618.0,825.7 L1620.5,825.6 L1623.0,826.3 L1625.5,824.1 L1628.0,825.6 L1630.5,825.3 L1633.0,823.9 L1635.5,824.6 L1638.0,823.5 L1640.5,823.8 L1643.0,823.5 L1645.5,823.8 L1648.0,825.4 L1650.5,826.5 L1653.0,826.9 L1655.5,826.6 L1658.0,826.9 L1660.5,826.6 L1663.0,825.8 L1665.5,825.2 L1668.0,826.8 L1670.5,825.0 L1673.0,826.5 L1675.5,826.3 L1678.0,826.5 L1680.5,827.4 L1683.0,827.2 L1685.5,827.3 L1688.0,826.0 L1690.5,824.4 L1693.0,822.5 L1695.5,822.6 L1698.0,822.9 L1700.5,822.0 L1703.0,819.6 L1705.5,818.1 L1708.0,816.0 L1710.5,817.3 L1713.0,815.9 L1715.5,817.1 L1718.0,816.7 L1720.5,816.3 L1723.0,815.8 L1725.5,818.0 L1728.0,815.8 L1730.5,816.0 L1733.0,815.4 L1735.5,815.1 L1738.0,816.4 L1741.0,816.5" fill="none" stroke="#33587a" stroke-width="0.9"/>
<path d="M255.5,898.5 L258.0,897.9 L260.5,898.1 L263.0,897.3 L265.5,897.7 L268.0,897.3 L270.5,896.9 L273.0,897.0 L275.5,896.1 L278.0,896.2 L280.5,895.5 L283.0,895.2 L285.5,895.2 L288.0,895.5 L290.5,894.5 L293.0,894.4 L295.5,894.7 L298.0,894.9 L300.5,894.3 L303.0,893.9 L305.5,894.1 L308.0,892.4 L310.5,892.6 L313.0,891.4 L315.5,890.6 L318.0,889.9 L320.5,889.5 L323.0,889.4 L325.5,888.5 L328.0,888.8 L330.5,888.8 L333.0,888.4 L335.5,888.4 L338.0,887.6 L340.5,887.4 L343.0,887.3 L345.5,887.5 L348.0,887.0 L350.5,886.6 L353.0,886.4 L355.5,885.6 L358.0,884.7 L360.5,884.6 L363.0,883.8 L365.5,883.3 L368.0,883.8 L370.5,883.9 L373.0,884.3 L375.5,884.0 L378.0,883.3 L380.5,884.1 L383.0,883.5 L385.5,884.1 L388.0,884.8 L390.5,884.4 L393.0,884.8 L395.5,884.3 L398.0,885.0 L400.5,885.6 L403.0,885.9 L405.5,886.9 L408.0,886.9 L410.5,888.2 L413.0,888.9 L415.5,889.7 L418.0,890.3 L420.5,890.3 L423.0,890.0 L425.5,889.0 L428.0,888.8 L430.5,887.9 L433.0,888.4 L435.5,888.1 L438.0,888.3 L440.5,888.1 L443.0,889.2 L445.5,890.1 L448.0,890.0 L450.5,888.9 L453.0,889.0 L455.5,888.3 L458.0,888.0 L460.5,887.8 L463.0,888.4 L465.5,887.6 L468.0,887.6 L470.5,887.6 L473.0,888.0 L475.5,887.3 L478.0,887.9 L480.5,888.2 L483.0,888.8 L485.5,888.9 L488.0,889.2 L490.5,888.7 L493.0,888.8 L495.5,888.7 L498.0,889.1 L500.5,889.1 L503.0,888.2 L505.5,888.1 L508.0,888.3 L510.5,888.6 L513.0,889.2 L515.5,889.6 L518.0,889.3 L520.5,889.0 L523.0,889.5 L525.5,889.4 L528.0,889.6 L530.5,890.0 L533.0,889.9 L535.5,890.1 L538.0,890.5 L540.5,890.4 L543.0,889.6 L545.5,890.3 L548.0,890.1 L550.5,890.0 L553.0,890.0 L555.5,889.8 L558.0,890.1 L560.5,890.0 L563.0,890.8 L565.5,890.5 L568.0,890.7 L570.5,891.0 L573.0,891.0 L575.5,891.3 L578.0,891.1 L580.5,891.1 L583.0,891.3 L585.5,891.1 L588.0,890.4 L590.5,889.0 L593.0,888.9 L595.5,887.6 L598.0,886.1 L600.5,886.4 L603.0,887.2 L605.5,887.9 L608.0,888.1 L610.5,889.3 L613.0,889.8 L615.5,889.5 L618.0,889.3 L620.5,888.6 L623.0,888.4 L625.5,888.6 L628.0,888.3 L630.5,888.8 L633.0,889.7 L635.5,891.4 L638.0,894.3 L640.5,894.6 L643.0,894.2 L645.5,894.6 L648.0,893.4 L650.5,893.2 L653.0,893.0 L655.5,892.1 L658.0,891.3 L660.5,890.4 L663.0,890.2 L665.5,889.6 L668.0,889.9 L670.5,889.4 L673.0,889.4 L675.5,888.6 L678.0,888.3 L680.5,888.8 L683.0,889.0 L685.5,888.8 L688.0,888.8 L690.5,888.8 L693.0,888.7 L695.5,888.4 L698.0,889.3 L700.5,889.8 L703.0,890.1 L705.5,890.8 L708.0,891.5 L710.5,891.5 L713.0,892.0 L715.5,892.3 L718.0,890.8 L720.5,890.4 L723.0,889.6 L725.5,888.6 L728.0,887.0 L730.5,886.0 L733.0,885.4 L735.5,885.6 L738.0,885.9 L740.5,886.6 L743.0,887.1 L745.5,887.1 L748.0,886.7 L750.5,886.9 L753.0,887.1 L755.5,886.3 L758.0,886.9 L760.5,887.1 L763.0,886.9 L765.5,886.7 L768.0,886.3 L770.5,885.9 L773.0,886.3 L775.5,885.5 L778.0,885.7 L780.5,885.5 L783.0,884.6 L785.5,884.3 L788.0,884.5 L790.5,884.5 L793.0,884.2 L795.5,884.4 L798.0,884.8 L800.5,885.9 L803.0,886.1 L805.5,885.7 L808.0,886.8 L810.5,887.3 L813.0,887.1 L815.5,887.0 L818.0,887.4 L820.5,887.1 L823.0,886.4 L825.5,886.0 L828.0,884.2 L830.5,882.9 L833.0,883.0 L835.5,882.3 L838.0,882.5 L840.5,882.7 L843.0,882.5 L845.5,882.9 L848.0,883.1 L850.5,883.0 L853.0,883.2 L855.5,882.7 L858.0,882.8 L860.5,881.9 L863.0,882.2 L865.5,881.0 L868.0,880.6 L870.5,880.7 L873.0,881.1 L875.5,880.6 L878.0,881.1 L880.5,880.7 L883.0,881.0 L885.5,881.3 L888.0,881.1 L890.5,881.9 L893.0,881.9 L895.5,882.1 L898.0,883.3 L900.5,883.0 L903.0,883.6 L905.5,884.3 L908.0,884.7 L910.5,885.1 L913.0,886.2 L915.5,887.7 L918.0,889.3 L920.5,888.3 L923.0,888.5 L925.5,887.9 L928.0,887.6 L930.5,887.9 L933.0,887.6 L935.5,887.7 L938.0,887.9 L940.5,888.0 L943.0,887.5 L945.5,887.7 L948.0,887.6 L950.5,887.6 L953.0,887.8 L955.5,887.5 L958.0,887.6 L960.5,887.6 L963.0,887.4 L965.5,886.3 L968.0,885.7 L970.5,884.9 L973.0,883.6 L975.5,883.6 L978.0,883.8 L980.5,883.4 L983.0,882.3 L985.5,882.0 L988.0,882.0 L990.5,881.9 L993.0,882.5 L995.5,882.8 L998.0,883.9 L1000.5,884.4 L1003.0,884.9 L1005.5,884.5 L1008.0,885.5 L1010.5,885.8 L1013.0,885.4 L1015.5,886.4 L1018.0,886.7 L1020.5,886.1 L1023.0,887.1 L1025.5,886.7 L1028.0,887.0 L1030.5,887.7 L1033.0,887.7 L1035.5,887.2 L1038.0,887.7 L1040.5,888.0 L1043.0,888.0 L1045.5,888.0 L1048.0,888.5 L1050.5,889.5 L1053.0,889.3 L1055.5,890.4 L1058.0,890.3 L1060.5,889.9 L1063.0,890.2 L1065.5,891.4 L1068.0,892.6 L1070.5,893.4 L1073.0,894.7 L1075.5,894.7 L1078.0,895.1 L1080.5,894.8 L1083.0,895.5 L1085.5,895.9 L1088.0,896.7 L1090.5,894.9 L1093.0,893.4 L1095.5,893.0 L1098.0,893.2 L1100.5,892.9 L1103.0,892.0 L1105.5,891.7 L1108.0,892.2 L1110.5,892.3 L1113.0,892.9 L1115.5,892.8 L1118.0,893.3 L1120.5,894.0 L1123.0,893.2 L1125.5,892.3 L1128.0,893.2 L1130.5,895.5 L1133.0,898.4 L1135.5,900.3 L1138.0,903.8 L1140.5,900.9 L1143.0,900.2 L1145.5,900.3 L1148.0,900.5 L1150.5,900.6 L1153.0,900.8 L1155.5,900.0 L1158.0,899.7 L1160.5,900.8 L1163.0,901.3 L1165.5,900.6 L1168.0,899.5 L1170.5,898.3 L1173.0,897.3 L1175.5,896.5 L1178.0,896.4 L1180.5,896.7 L1183.0,896.1 L1185.5,896.1 L1188.0,895.6 L1190.5,895.6 L1193.0,895.0 L1195.5,895.0 L1198.0,894.5 L1200.5,895.0 L1203.0,894.4 L1205.5,891.7 L1208.0,889.8 L1210.5,890.1 L1213.0,889.3 L1215.5,890.2 L1218.0,889.8 L1220.5,890.2 L1223.0,891.3 L1225.5,891.6 L1228.0,892.2 L1230.5,892.8 L1233.0,893.5 L1235.5,892.7 L1238.0,892.8 L1240.5,892.3 L1243.0,891.9 L1245.5,891.4 L1248.0,891.2 L1250.5,890.7 L1253.0,890.6 L1255.5,890.4 L1258.0,890.9 L1260.5,890.2 L1263.0,890.0 L1265.5,889.9 L1268.0,890.7 L1270.5,890.8 L1273.0,890.6 L1275.5,890.1 L1278.0,889.9 L1280.5,889.8 L1283.0,889.8 L1285.5,889.3 L1288.0,889.4 L1290.5,889.1 L1293.0,889.6 L1295.5,889.4 L1298.0,888.5 L1300.5,887.8 L1303.0,888.1 L1305.5,887.0 L1308.0,886.6 L1310.5,885.8 L1313.0,885.8 L1315.5,885.5 L1318.0,885.2 L1320.5,884.6 L1323.0,884.6 L1325.5,883.8 L1328.0,883.8 L1330.5,883.9 L1333.0,884.8 L1335.5,884.9 L1338.0,885.4 L1340.5,885.9 L1343.0,885.5 L1345.5,885.6 L1348.0,885.2 L1350.5,885.1 L1353.0,884.1 L1355.5,883.3 L1358.0,882.5 L1360.5,881.0 L1363.0,880.6 L1365.5,881.5 L1368.0,880.9 L1370.5,881.8 L1373.0,881.9 L1375.5,881.5 L1378.0,882.2 L1380.5,882.1 L1383.0,881.6 L1385.5,881.5 L1388.0,881.4 L1390.5,880.4 L1393.0,880.5 L1395.5,879.8 L1398.0,879.5 L1400.5,878.8 L1403.0,878.9 L1405.5,878.8 L1408.0,879.3 L1410.5,879.2 L1413.0,879.4 L1415.5,878.7 L1418.0,877.6 L1420.5,876.9 L1423.0,877.2 L1425.5,876.9 L1428.0,877.7 L1430.5,877.4 L1433.0,877.4 L1435.5,877.4 L1438.0,877.5 L1440.5,877.1 L1443.0,876.5 L1445.5,877.3 L1448.0,877.1 L1450.5,876.7 L1453.0,876.7 L1455.5,876.7 L1458.0,876.1 L1460.5,877.0 L1463.0,876.7 L1465.5,876.7 L1468.0,877.1 L1470.5,877.7 L1473.0,877.3 L1475.5,878.1 L1478.0,878.3 L1480.5,877.6 L1483.0,877.4 L1485.5,877.4 L1488.0,877.5 L1490.5,877.4 L1493.0,877.1 L1495.5,877.0 L1498.0,876.3 L1500.5,876.3 L1503.0,876.2 L1505.5,877.0 L1508.0,877.0 L1510.5,877.7 L1513.0,877.7 L1515.5,878.8 L1518.0,879.7 L1520.5,879.5 L1523.0,878.8 L1525.5,878.2 L1528.0,877.5 L1530.5,877.6 L1533.0,877.3 L1535.5,877.1 L1538.0,876.6 L1540.5,877.2 L1543.0,876.3 L1545.5,877.0 L1548.0,877.4 L1550.5,876.9 L1553.0,877.8 L1555.5,878.6 L1558.0,879.0 L1560.5,878.6 L1563.0,878.6 L1565.5,878.6 L1568.0,879.6 L1570.5,878.9 L1573.0,878.9 L1575.5,878.0 L1578.0,877.9 L1580.5,878.0 L1583.0,877.3 L1585.5,878.7 L1588.0,878.9 L1590.5,880.0 L1593.0,880.5 L1595.5,881.2 L1598.0,883.2 L1600.5,882.1 L1603.0,880.8 L1605.5,880.0 L1608.0,879.7 L1610.5,879.1 L1613.0,878.7 L1615.5,878.2 L1618.0,878.2 L1620.5,877.9 L1623.0,878.3 L1625.5,877.1 L1628.0,877.7 L1630.5,877.4 L1633.0,876.3 L1635.5,876.9 L1638.0,876.3 L1640.5,876.2 L1643.0,875.9 L1645.5,876.7 L1648.0,877.5 L1650.5,878.8 L1653.0,879.1 L1655.5,879.0 L1658.0,879.0 L1660.5,878.7 L1663.0,878.3 L1665.5,878.2 L1668.0,878.9 L1670.5,878.2 L1673.0,879.2 L1675.5,878.7 L1678.0,879.1 L1680.5,879.6 L1683.0,879.6 L1685.5,879.4 L1688.0,878.7 L1690.5,877.3 L1693.0,876.1 L1695.5,876.6 L1698.0,877.7 L1700.5,876.8 L1703.0,875.3 L1705.5,874.4 L1708.0,873.0 L1710.5,873.3 L1713.0,872.6 L1715.5,872.6 L1718.0,872.5 L1720.5,872.1 L1723.0,871.8 L1725.5,872.8 L1728.0,872.0 L1730.5,872.4 L1733.0,872.3 L1735.5,872.2 L1738.0,872.7 L1741.0,873.0 L1741,976 L255.5,976 Z" fill="#a8bd3c"/><path d="M255.5,898.5 L258.0,897.9 L260.5,898.1 L263.0,897.3 L265.5,897.7 L268.0,897.3 L270.5,896.9 L273.0,897.0 L275.5,896.1 L278.0,896.2 L280.5,895.5 L283.0,895.2 L285.5,895.2 L288.0,895.5 L290.5,894.5 L293.0,894.4 L295.5,894.7 L298.0,894.9 L300.5,894.3 L303.0,893.9 L305.5,894.1 L308.0,892.4 L310.5,892.6 L313.0,891.4 L315.5,890.6 L318.0,889.9 L320.5,889.5 L323.0,889.4 L325.5,888.5 L328.0,888.8 L330.5,888.8 L333.0,888.4 L335.5,888.4 L338.0,887.6 L340.5,887.4 L343.0,887.3 L345.5,887.5 L348.0,887.0 L350.5,886.6 L353.0,886.4 L355.5,885.6 L358.0,884.7 L360.5,884.6 L363.0,883.8 L365.5,883.3 L368.0,883.8 L370.5,883.9 L373.0,884.3 L375.5,884.0 L378.0,883.3 L380.5,884.1 L383.0,883.5 L385.5,884.1 L388.0,884.8 L390.5,884.4 L393.0,884.8 L395.5,884.3 L398.0,885.0 L400.5,885.6 L403.0,885.9 L405.5,886.9 L408.0,886.9 L410.5,888.2 L413.0,888.9 L415.5,889.7 L418.0,890.3 L420.5,890.3 L423.0,890.0 L425.5,889.0 L428.0,888.8 L430.5,887.9 L433.0,888.4 L435.5,888.1 L438.0,888.3 L440.5,888.1 L443.0,889.2 L445.5,890.1 L448.0,890.0 L450.5,888.9 L453.0,889.0 L455.5,888.3 L458.0,888.0 L460.5,887.8 L463.0,888.4 L465.5,887.6 L468.0,887.6 L470.5,887.6 L473.0,888.0 L475.5,887.3 L478.0,887.9 L480.5,888.2 L483.0,888.8 L485.5,888.9 L488.0,889.2 L490.5,888.7 L493.0,888.8 L495.5,888.7 L498.0,889.1 L500.5,889.1 L503.0,888.2 L505.5,888.1 L508.0,888.3 L510.5,888.6 L513.0,889.2 L515.5,889.6 L518.0,889.3 L520.5,889.0 L523.0,889.5 L525.5,889.4 L528.0,889.6 L530.5,890.0 L533.0,889.9 L535.5,890.1 L538.0,890.5 L540.5,890.4 L543.0,889.6 L545.5,890.3 L548.0,890.1 L550.5,890.0 L553.0,890.0 L555.5,889.8 L558.0,890.1 L560.5,890.0 L563.0,890.8 L565.5,890.5 L568.0,890.7 L570.5,891.0 L573.0,891.0 L575.5,891.3 L578.0,891.1 L580.5,891.1 L583.0,891.3 L585.5,891.1 L588.0,890.4 L590.5,889.0 L593.0,888.9 L595.5,887.6 L598.0,886.1 L600.5,886.4 L603.0,887.2 L605.5,887.9 L608.0,888.1 L610.5,889.3 L613.0,889.8 L615.5,889.5 L618.0,889.3 L620.5,888.6 L623.0,888.4 L625.5,888.6 L628.0,888.3 L630.5,888.8 L633.0,889.7 L635.5,891.4 L638.0,894.3 L640.5,894.6 L643.0,894.2 L645.5,894.6 L648.0,893.4 L650.5,893.2 L653.0,893.0 L655.5,892.1 L658.0,891.3 L660.5,890.4 L663.0,890.2 L665.5,889.6 L668.0,889.9 L670.5,889.4 L673.0,889.4 L675.5,888.6 L678.0,888.3 L680.5,888.8 L683.0,889.0 L685.5,888.8 L688.0,888.8 L690.5,888.8 L693.0,888.7 L695.5,888.4 L698.0,889.3 L700.5,889.8 L703.0,890.1 L705.5,890.8 L708.0,891.5 L710.5,891.5 L713.0,892.0 L715.5,892.3 L718.0,890.8 L720.5,890.4 L723.0,889.6 L725.5,888.6 L728.0,887.0 L730.5,886.0 L733.0,885.4 L735.5,885.6 L738.0,885.9 L740.5,886.6 L743.0,887.1 L745.5,887.1 L748.0,886.7 L750.5,886.9 L753.0,887.1 L755.5,886.3 L758.0,886.9 L760.5,887.1 L763.0,886.9 L765.5,886.7 L768.0,886.3 L770.5,885.9 L773.0,886.3 L775.5,885.5 L778.0,885.7 L780.5,885.5 L783.0,884.6 L785.5,884.3 L788.0,884.5 L790.5,884.5 L793.0,884.2 L795.5,884.4 L798.0,884.8 L800.5,885.9 L803.0,886.1 L805.5,885.7 L808.0,886.8 L810.5,887.3 L813.0,887.1 L815.5,887.0 L818.0,887.4 L820.5,887.1 L823.0,886.4 L825.5,886.0 L828.0,884.2 L830.5,882.9 L833.0,883.0 L835.5,882.3 L838.0,882.5 L840.5,882.7 L843.0,882.5 L845.5,882.9 L848.0,883.1 L850.5,883.0 L853.0,883.2 L855.5,882.7 L858.0,882.8 L860.5,881.9 L863.0,882.2 L865.5,881.0 L868.0,880.6 L870.5,880.7 L873.0,881.1 L875.5,880.6 L878.0,881.1 L880.5,880.7 L883.0,881.0 L885.5,881.3 L888.0,881.1 L890.5,881.9 L893.0,881.9 L895.5,882.1 L898.0,883.3 L900.5,883.0 L903.0,883.6 L905.5,884.3 L908.0,884.7 L910.5,885.1 L913.0,886.2 L915.5,887.7 L918.0,889.3 L920.5,888.3 L923.0,888.5 L925.5,887.9 L928.0,887.6 L930.5,887.9 L933.0,887.6 L935.5,887.7 L938.0,887.9 L940.5,888.0 L943.0,887.5 L945.5,887.7 L948.0,887.6 L950.5,887.6 L953.0,887.8 L955.5,887.5 L958.0,887.6 L960.5,887.6 L963.0,887.4 L965.5,886.3 L968.0,885.7 L970.5,884.9 L973.0,883.6 L975.5,883.6 L978.0,883.8 L980.5,883.4 L983.0,882.3 L985.5,882.0 L988.0,882.0 L990.5,881.9 L993.0,882.5 L995.5,882.8 L998.0,883.9 L1000.5,884.4 L1003.0,884.9 L1005.5,884.5 L1008.0,885.5 L1010.5,885.8 L1013.0,885.4 L1015.5,886.4 L1018.0,886.7 L1020.5,886.1 L1023.0,887.1 L1025.5,886.7 L1028.0,887.0 L1030.5,887.7 L1033.0,887.7 L1035.5,887.2 L1038.0,887.7 L1040.5,888.0 L1043.0,888.0 L1045.5,888.0 L1048.0,888.5 L1050.5,889.5 L1053.0,889.3 L1055.5,890.4 L1058.0,890.3 L1060.5,889.9 L1063.0,890.2 L1065.5,891.4 L1068.0,892.6 L1070.5,893.4 L1073.0,894.7 L1075.5,894.7 L1078.0,895.1 L1080.5,894.8 L1083.0,895.5 L1085.5,895.9 L1088.0,896.7 L1090.5,894.9 L1093.0,893.4 L1095.5,893.0 L1098.0,893.2 L1100.5,892.9 L1103.0,892.0 L1105.5,891.7 L1108.0,892.2 L1110.5,892.3 L1113.0,892.9 L1115.5,892.8 L1118.0,893.3 L1120.5,894.0 L1123.0,893.2 L1125.5,892.3 L1128.0,893.2 L1130.5,895.5 L1133.0,898.4 L1135.5,900.3 L1138.0,903.8 L1140.5,900.9 L1143.0,900.2 L1145.5,900.3 L1148.0,900.5 L1150.5,900.6 L1153.0,900.8 L1155.5,900.0 L1158.0,899.7 L1160.5,900.8 L1163.0,901.3 L1165.5,900.6 L1168.0,899.5 L1170.5,898.3 L1173.0,897.3 L1175.5,896.5 L1178.0,896.4 L1180.5,896.7 L1183.0,896.1 L1185.5,896.1 L1188.0,895.6 L1190.5,895.6 L1193.0,895.0 L1195.5,895.0 L1198.0,894.5 L1200.5,895.0 L1203.0,894.4 L1205.5,891.7 L1208.0,889.8 L1210.5,890.1 L1213.0,889.3 L1215.5,890.2 L1218.0,889.8 L1220.5,890.2 L1223.0,891.3 L1225.5,891.6 L1228.0,892.2 L1230.5,892.8 L1233.0,893.5 L1235.5,892.7 L1238.0,892.8 L1240.5,892.3 L1243.0,891.9 L1245.5,891.4 L1248.0,891.2 L1250.5,890.7 L1253.0,890.6 L1255.5,890.4 L1258.0,890.9 L1260.5,890.2 L1263.0,890.0 L1265.5,889.9 L1268.0,890.7 L1270.5,890.8 L1273.0,890.6 L1275.5,890.1 L1278.0,889.9 L1280.5,889.8 L1283.0,889.8 L1285.5,889.3 L1288.0,889.4 L1290.5,889.1 L1293.0,889.6 L1295.5,889.4 L1298.0,888.5 L1300.5,887.8 L1303.0,888.1 L1305.5,887.0 L1308.0,886.6 L1310.5,885.8 L1313.0,885.8 L1315.5,885.5 L1318.0,885.2 L1320.5,884.6 L1323.0,884.6 L1325.5,883.8 L1328.0,883.8 L1330.5,883.9 L1333.0,884.8 L1335.5,884.9 L1338.0,885.4 L1340.5,885.9 L1343.0,885.5 L1345.5,885.6 L1348.0,885.2 L1350.5,885.1 L1353.0,884.1 L1355.5,883.3 L1358.0,882.5 L1360.5,881.0 L1363.0,880.6 L1365.5,881.5 L1368.0,880.9 L1370.5,881.8 L1373.0,881.9 L1375.5,881.5 L1378.0,882.2 L1380.5,882.1 L1383.0,881.6 L1385.5,881.5 L1388.0,881.4 L1390.5,880.4 L1393.0,880.5 L1395.5,879.8 L1398.0,879.5 L1400.5,878.8 L1403.0,878.9 L1405.5,878.8 L1408.0,879.3 L1410.5,879.2 L1413.0,879.4 L1415.5,878.7 L1418.0,877.6 L1420.5,876.9 L1423.0,877.2 L1425.5,876.9 L1428.0,877.7 L1430.5,877.4 L1433.0,877.4 L1435.5,877.4 L1438.0,877.5 L1440.5,877.1 L1443.0,876.5 L1445.5,877.3 L1448.0,877.1 L1450.5,876.7 L1453.0,876.7 L1455.5,876.7 L1458.0,876.1 L1460.5,877.0 L1463.0,876.7 L1465.5,876.7 L1468.0,877.1 L1470.5,877.7 L1473.0,877.3 L1475.5,878.1 L1478.0,878.3 L1480.5,877.6 L1483.0,877.4 L1485.5,877.4 L1488.0,877.5 L1490.5,877.4 L1493.0,877.1 L1495.5,877.0 L1498.0,876.3 L1500.5,876.3 L1503.0,876.2 L1505.5,877.0 L1508.0,877.0 L1510.5,877.7 L1513.0,877.7 L1515.5,878.8 L1518.0,879.7 L1520.5,879.5 L1523.0,878.8 L1525.5,878.2 L1528.0,877.5 L1530.5,877.6 L1533.0,877.3 L1535.5,877.1 L1538.0,876.6 L1540.5,877.2 L1543.0,876.3 L1545.5,877.0 L1548.0,877.4 L1550.5,876.9 L1553.0,877.8 L1555.5,878.6 L1558.0,879.0 L1560.5,878.6 L1563.0,878.6 L1565.5,878.6 L1568.0,879.6 L1570.5,878.9 L1573.0,878.9 L1575.5,878.0 L1578.0,877.9 L1580.5,878.0 L1583.0,877.3 L1585.5,878.7 L1588.0,878.9 L1590.5,880.0 L1593.0,880.5 L1595.5,881.2 L1598.0,883.2 L1600.5,882.1 L1603.0,880.8 L1605.5,880.0 L1608.0,879.7 L1610.5,879.1 L1613.0,878.7 L1615.5,878.2 L1618.0,878.2 L1620.5,877.9 L1623.0,878.3 L1625.5,877.1 L1628.0,877.7 L1630.5,877.4 L1633.0,876.3 L1635.5,876.9 L1638.0,876.3 L1640.5,876.2 L1643.0,875.9 L1645.5,876.7 L1648.0,877.5 L1650.5,878.8 L1653.0,879.1 L1655.5,879.0 L1658.0,879.0 L1660.5,878.7 L1663.0,878.3 L1665.5,878.2 L1668.0,878.9 L1670.5,878.2 L1673.0,879.2 L1675.5,878.7 L1678.0,879.1 L1680.5,879.6 L1683.0,879.6 L1685.5,879.4 L1688.0,878.7 L1690.5,877.3 L1693.0,876.1 L1695.5,876.6 L1698.0,877.7 L1700.5,876.8 L1703.0,875.3 L1705.5,874.4 L1708.0,873.0 L1710.5,873.3 L1713.0,872.6 L1715.5,872.6 L1718.0,872.5 L1720.5,872.1 L1723.0,871.8 L1725.5,872.8 L1728.0,872.0 L1730.5,872.4 L1733.0,872.3 L1735.5,872.2 L1738.0,872.7 L1741.0,873.0" fill="none" stroke="#5f6e3a" stroke-width="0.9"/>
<line x1="256" y1="839.5" x2="1741" y2="839.5" stroke="rgba(0,0,0,0.06)" stroke-width="1"/>
<line x1="256" y1="884.8" x2="1741" y2="884.8" stroke="rgba(0,0,0,0.06)" stroke-width="1"/>
<line x1="256" y1="929.9" x2="1741" y2="929.9" stroke="rgba(0,0,0,0.06)" stroke-width="1"/>
<line x1="1741.5" y1="815" x2="1741.5" y2="976" stroke="#111" stroke-width="1.5"/>
<line x1="1741" y1="815.5" x2="1746" y2="815.5" stroke="#111" stroke-width="1.5"/>
<text x="1750" y="819.5" font-size="12" fill="#222" font-family="Liberation Sans">$3.5M</text>
<line x1="1741" y1="839.5" x2="1746" y2="839.5" stroke="#111" stroke-width="1.5"/>
<text x="1750" y="843.5" font-size="12" fill="#222" font-family="Liberation Sans">$3.0M</text>
<line x1="1741" y1="884.8" x2="1746" y2="884.8" stroke="#111" stroke-width="1.5"/>
<text x="1750" y="888.8" font-size="12" fill="#222" font-family="Liberation Sans">$2.0M</text>
<line x1="1741" y1="929.9" x2="1746" y2="929.9" stroke="#111" stroke-width="1.5"/>
<text x="1750" y="933.9" font-size="12" fill="#222" font-family="Liberation Sans">$1.0M</text>
<line x1="1741" y1="975.7" x2="1746" y2="975.7" stroke="#111" stroke-width="1.5"/>
<text x="1755" y="979.7" font-size="12" fill="#222" font-family="Liberation Sans">$0.0</text>
</svg>
<div class="abs" style="left:225px;top:785px;color:#111;font-size:12px;font-weight:bold;line-height:14px">Value Over Time</div>
<div class="abs" style="left:332px;top:785px;color:#666;font-size:12px;font-style:italic;line-height:14px">$2,659,936 - $3,487,099</div>
<svg class="abs" style="left:0;top:0" width="400" height="450" viewBox="0 0 400 450"><defs><filter id="sh" x="-20%" y="-20%" width="140%" height="140%"><feDropShadow dx="1.5" dy="2" stdDeviation="1.5" flood-opacity="0.35"/></filter></defs><g filter="url(#sh)"><line x1="271.5" y1="340.5" x2="192" y2="389" stroke="#ff2200" stroke-width="5.5" stroke-linecap="butt"/><path d="M173.5,401 L187.5,378 L200.5,398.5 Z" fill="#ff2200"/></g></svg>
<div class="abs" style="left:0;top:987px;width:1798px;height:1px;background:#263f4a"></div>
</body></html>
